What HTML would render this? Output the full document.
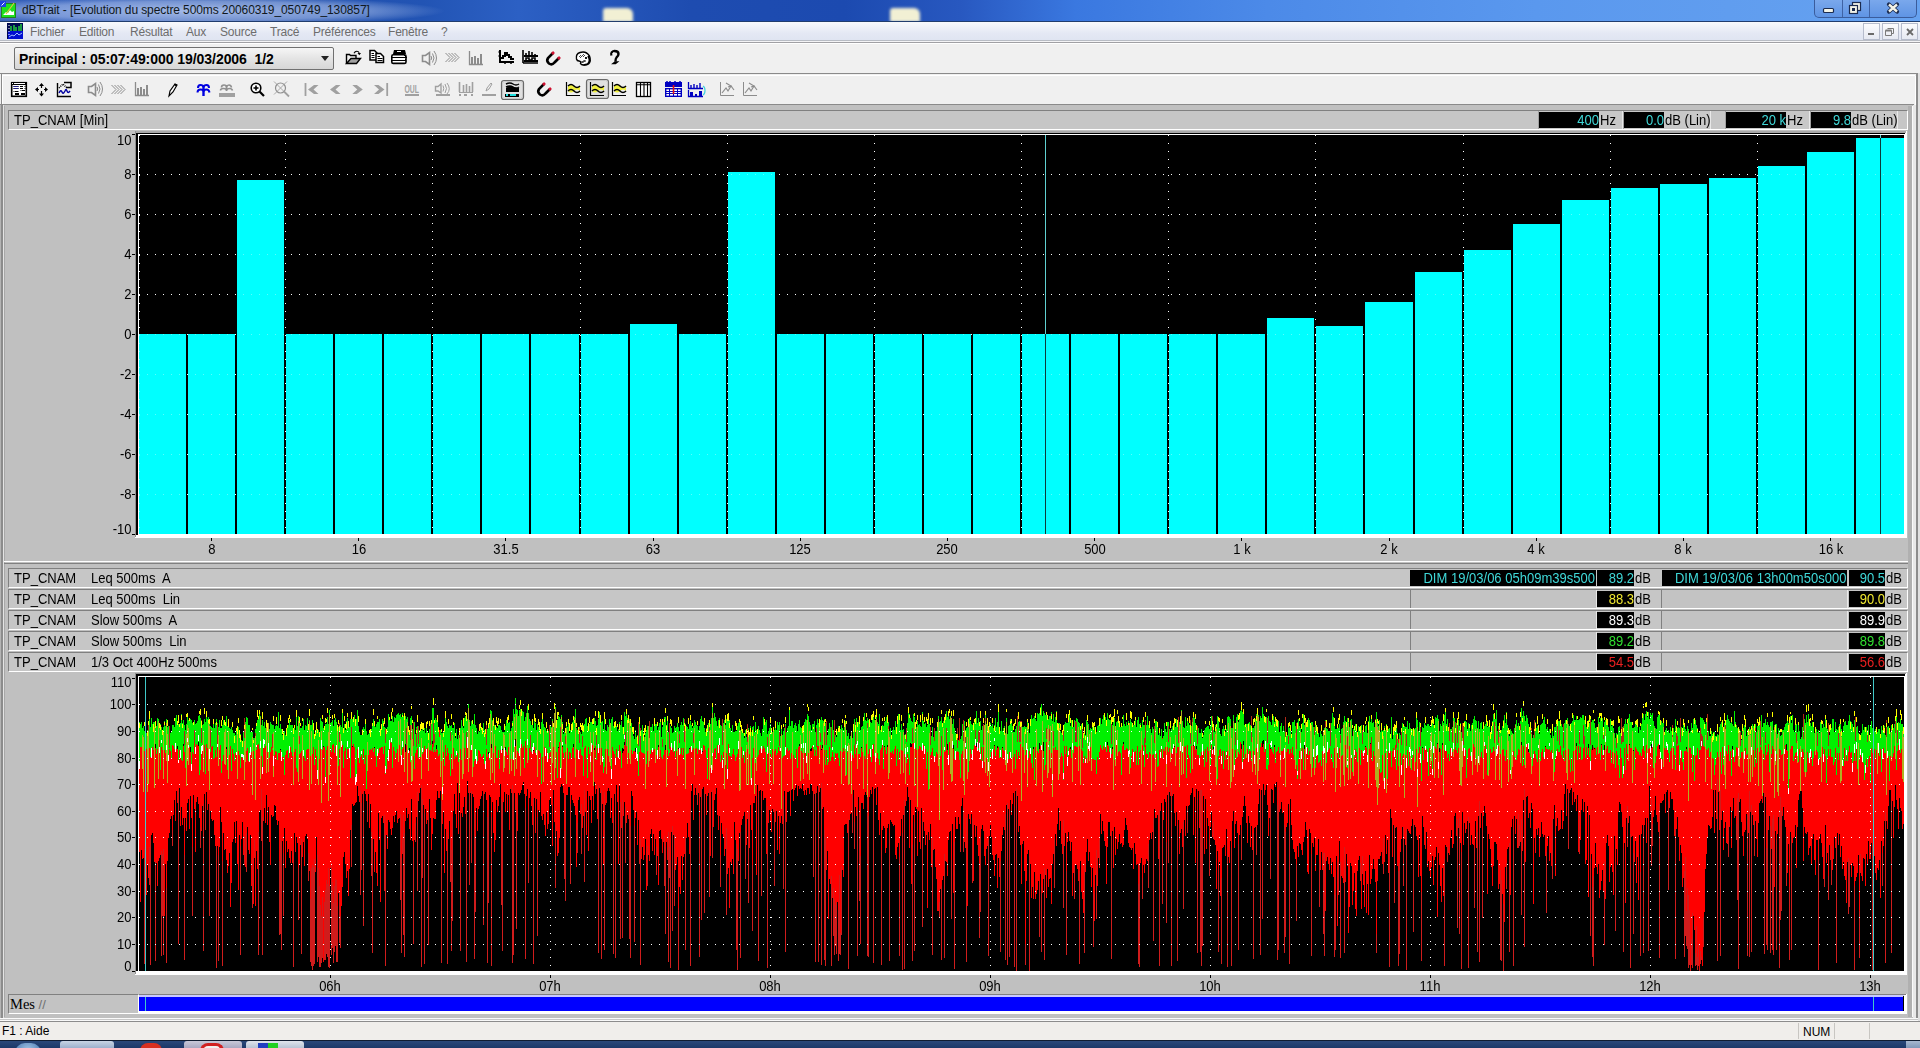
<!DOCTYPE html><html><head><meta charset="utf-8"><style>
html,body{margin:0;padding:0}
body{width:1920px;height:1048px;position:relative;overflow:hidden;background:#c0c0c0;font-family:"Liberation Sans", sans-serif;}
div{box-sizing:border-box}
.t{position:absolute;white-space:nowrap;line-height:1}
svg{position:absolute;left:0;top:0}
</style></head><body>
<div style="position:absolute;left:0px;top:0px;width:1920px;height:21px;background:linear-gradient(90deg,#3a62b8 0%,#2a58b8 3%,#1f4ca8 12%,#2254b4 22%,#2c60c4 27%,#1e4cb0 36%,#1c4ab0 44%,#2858c0 50%,#3a78e0 56%,#4c8ae8 66%,#5a98ee 80%,#66a2f0 100%)"></div><div style="position:absolute;left:0px;top:0px;width:520px;height:21px;background:radial-gradient(ellipse 250px 15px at 195px 11px, rgba(215,228,255,0.72), rgba(215,228,255,0.45) 65%, rgba(215,228,255,0) 100%)"></div><div style="position:absolute;left:603px;top:8px;width:30px;height:14px;background:#f2f0d4;filter:blur(1.5px);border-radius:3px 6px 0 0"></div><div style="position:absolute;left:890px;top:8px;width:30px;height:14px;background:#f2f0d4;filter:blur(1.5px);border-radius:3px 6px 0 0"></div><div style="position:absolute;left:0px;top:21px;width:1920px;height:1px;background:#213d6e"></div><svg width="20" height="21" style="position:absolute;left:0;top:0"><rect x="1.5" y="3.5" width="14" height="14" fill="#20e020" stroke="#208020"/><path d="M3 15l3-3l2 1l2-3l2 2l2-1v4h-11z" fill="#fff"/><path d="M6 14l8-11" stroke="#e0c040" stroke-width="1.2"/><rect x="0" y="1" width="6" height="6" fill="#2040e0"/><path d="M1.5 5.5l3-3" stroke="#fff"/></svg><div style="position:absolute;left:22px;top:3px;white-space:nowrap;font-size:12px;color:#101820;letter-spacing:-0.1px">dBTrait - [Evolution du spectre 500ms 20060319_050749_130857]</div><div style="position:absolute;left:1814px;top:0px;width:103px;height:18px;background:linear-gradient(#7aa8ec,#5f94e4);border:1px solid #3a5c9c;border-top:none;border-radius:0 0 5px 5px"></div><div style="position:absolute;left:1842px;top:0px;width:1px;height:17px;background:#3f63a5"></div><div style="position:absolute;left:1869px;top:0px;width:1px;height:17px;background:#3f63a5"></div><svg width="110" height="20" style="position:absolute;left:1814px;top:0"><rect x="9.5" y="8.5" width="10" height="4" rx="1" fill="#f4f4e8" stroke="#1c2c50" stroke-width="1.2"/><rect x="38.5" y="2.5" width="8" height="8" fill="#f4f4e8" stroke="#1c2c50" stroke-width="1.2"/><rect x="35.5" y="5.5" width="8" height="8" fill="#f4f4e8" stroke="#1c2c50" stroke-width="1.2"/><rect x="38" y="8" width="3" height="3" fill="#1c2c50"/><path d="M75 4.5l8 7M83 4.5l-8 7" stroke="#1c2c50" stroke-width="4.2" stroke-linecap="round"/><path d="M75 4.5l8 7M83 4.5l-8 7" stroke="#f4f4e8" stroke-width="2.4" stroke-linecap="butt"/></svg><div style="position:absolute;left:0px;top:22px;width:1920px;height:19px;background:linear-gradient(#f8f9fc,#e4e8f4 60%,#dfe4f1)"></div><div style="position:absolute;left:0px;top:40px;width:1920px;height:1px;background:#b8bcc4"></div><div style="position:absolute;left:0px;top:41px;width:1920px;height:1px;background:#f4f4f6"></div><div style="position:absolute;left:0px;top:42px;width:1920px;height:1px;background:#a0a0a4"></div><svg width="20" height="20" style="position:absolute;left:6px;top:22px"><rect x="1" y="1" width="16" height="16" fill="#000850"/><rect x="2" y="9" width="15" height="8" fill="#0010d0"/><path d="M5 9V4M8 9V3M10 9V5M13 9V4M15 9V2" stroke="#20c040" stroke-width="1.6"/><path d="M3 3v1M3 6v1M3 9v1M3 12v1" stroke="#fff"/><path d="M3 15l3-2l2 1l3-3l2 2l3-2" fill="none" stroke="#a0c0ff" stroke-width="1"/></svg><div style="position:absolute;left:30px;top:25px;white-space:nowrap;font-size:12px;color:#6d6d6d;letter-spacing:-0.2px">Fichier</div><div style="position:absolute;left:79px;top:25px;white-space:nowrap;font-size:12px;color:#6d6d6d;letter-spacing:-0.2px">Edition</div><div style="position:absolute;left:130px;top:25px;white-space:nowrap;font-size:12px;color:#6d6d6d;letter-spacing:-0.2px">Résultat</div><div style="position:absolute;left:186px;top:25px;white-space:nowrap;font-size:12px;color:#6d6d6d;letter-spacing:-0.2px">Aux</div><div style="position:absolute;left:220px;top:25px;white-space:nowrap;font-size:12px;color:#6d6d6d;letter-spacing:-0.2px">Source</div><div style="position:absolute;left:270px;top:25px;white-space:nowrap;font-size:12px;color:#6d6d6d;letter-spacing:-0.2px">Tracé</div><div style="position:absolute;left:313px;top:25px;white-space:nowrap;font-size:12px;color:#6d6d6d;letter-spacing:-0.2px">Préférences</div><div style="position:absolute;left:388px;top:25px;white-space:nowrap;font-size:12px;color:#6d6d6d;letter-spacing:-0.2px">Fenêtre</div><div style="position:absolute;left:441px;top:25px;white-space:nowrap;font-size:12px;color:#6d6d6d;letter-spacing:-0.2px">?</div><div style="position:absolute;left:1863px;top:23px;width:17px;height:17px;border:1px solid #b6bccc;background:linear-gradient(#fbfbfd,#e6e9f2)"></div><div style="position:absolute;left:1882px;top:23px;width:17px;height:17px;border:1px solid #b6bccc;background:linear-gradient(#fbfbfd,#e6e9f2)"></div><div style="position:absolute;left:1901px;top:23px;width:17px;height:17px;border:1px solid #b6bccc;background:linear-gradient(#fbfbfd,#e6e9f2)"></div><svg width="60" height="20" style="position:absolute;left:1860px;top:22px"><rect x="8" y="11" width="6" height="2" fill="#6a6a6a"/><path d="M27.5 6.5h6v5h-2M25.5 8.5h6v5h-6z" fill="none" stroke="#7a7a7a"/><path d="M25.5 8.5h6" stroke="#7a7a7a" stroke-width="2"/><path d="M47 7l6 6M53 7l-6 6" stroke="#6a6a6a" stroke-width="1.8"/></svg><div style="position:absolute;left:0px;top:43px;width:1920px;height:30px;background:#f0f0f0"></div><div style="position:absolute;left:0px;top:43px;width:1920px;height:1px;background:#fff"></div><div style="position:absolute;left:0px;top:73px;width:1918px;height:1px;background:#8a8a8a"></div><div style="position:absolute;left:0px;top:74px;width:1920px;height:31px;background:#f0f0f0"></div><div style="position:absolute;left:1px;top:73px;width:1917px;height:1px;background:#8a8a8a"></div><div style="position:absolute;left:2px;top:75px;width:1913px;height:1px;background:#fff"></div><div style="position:absolute;left:1px;top:74px;width:1px;height:31px;background:#8a8a8a"></div><div style="position:absolute;left:2px;top:75px;width:1px;height:30px;background:#fff"></div><div style="position:absolute;left:0px;top:104px;width:1914px;height:1px;background:#8a8a8a"></div><div style="position:absolute;left:14px;top:47px;width:320px;height:23px;border:1px solid #707070;border-radius:2px;background:linear-gradient(#f6f6f6,#e4e4e4 50%,#d6d6d6)"></div><div style="position:absolute;left:19px;top:52px;white-space:nowrap;font-size:14px;font-weight:bold;color:#000;letter-spacing:-0.05px;line-height:14px">Principal : 05:07:49:000 19/03/2006&nbsp; 1/2</div><svg width="1920" height="110" style="position:absolute;left:0;top:0"><path d="M321 56h8l-4 5z" fill="#222"/></svg><svg width="800" height="110" style="position:absolute;left:0;top:0"><path d="M346.5 63.5V54.5h3l1 1h5.5v3" stroke="#000" stroke-width="1.4" fill="none"/><path d="M346.5 63.5L351 58.5h9.5L356.5 63.5z" fill="#a0a0a0" stroke="#000" stroke-width="1.4"/><path d="M354 53.2c1.5-2.5 4-2.5 5.2-0.5" stroke="#000" stroke-width="1.2" fill="none"/><path d="M357.5 53h3.5l-1.7 2.2z" fill="#000"/><path d="M370 50.5h4.5l2.5 2.5v7h-7z" fill="#fff" stroke="#000" stroke-width="1.5"/><path d="M371.5 53.5h2.5M371.5 55.5h3M371.5 57.5h3" stroke="#000" stroke-width="1"/><path d="M376 53.5h4.5l3 3v6h-7.5z" fill="#fff" stroke="#000" stroke-width="1.5"/><path d="M377.5 56.5h2.5M377.5 58.5h5M377.5 60.5h5" stroke="#000" stroke-width="1"/><path d="M394 50h11l1 4h-13z" fill="#000"/><rect x="397" y="51" width="4" height="1" fill="#fff"/><rect x="391.8" y="54.8" width="14.2" height="8.6" rx="1.5" fill="#fff" stroke="#000" stroke-width="1.6"/><path d="M392 57.5h14M392 60.5h14" stroke="#000" stroke-width="1.2"/><path d="M404 55l3 3M404 61l2-2" stroke="#000" stroke-width="1"/><path d="M422.5 55.5h3l4-3v12l-4-3h-3z" fill="none" stroke="#8c8c8c" stroke-width="1.6"/><path d="M431 56q1.5 2 0 4M432.5 53.5q3 4.5 0 9M434 51q5 7 0 14" fill="none" stroke="#8c8c8c" stroke-width="1"/><path d="M445.5 53l4.5 4.5l-4.5 4.5M448.5 53l4.5 4.5l-4.5 4.5M451.5 53l4.5 4.5l-4.5 4.5M454.5 53l4.5 4.5l-4.5 4.5" fill="none" stroke="#8c8c8c" stroke-width="1"/><path d="M469.5 51V64.5H483" fill="none" stroke="#8c8c8c" stroke-width="1.3"/><rect x="471" y="57" width="2" height="7" fill="#8c8c8c"/><rect x="474" y="56" width="2" height="8" fill="#8c8c8c"/><rect x="477" y="58" width="2" height="6" fill="#8c8c8c"/><rect x="480" y="54" width="2" height="10" fill="#8c8c8c"/><path d="M500 50V63M500 62h14" stroke="#000" stroke-width="2"/><path d="M501 58h2v-2h2v-3h2v2h2v2h2v2h3" fill="none" stroke="#000" stroke-width="2"/><path d="M505 63v1M511 63v1M498.5 52h1M498.5 56h1" stroke="#000" stroke-width="1.5"/><path d="M523 50V63M523 63h15" stroke="#000" stroke-width="1.6"/><path d="M524 56h14M524 61h14" stroke="#000" stroke-width="2"/><path d="M526 56v-3M529 56v-5M532 56v-4M535 56v-2M526 61v-3h3v2h3v-2h3v2" fill="none" stroke="#000" stroke-width="1.6"/><path d="M553 53L548 58q-2 3 1 5.5q3 2 5.5-1L559 58" fill="none" stroke="#000" stroke-width="2.6"/><path d="M552 54l2-2M558 59l2-2" stroke="#d01030" stroke-width="2.6"/><path d="M580 52.5q6-2 9.5 3.5q2 5-1 8q-3 2-7 0.5l-1-1q1-2-1.5-2.5q-2 0-2.5-2q-1-5 3.5-6.5z" fill="#fff" stroke="#000" stroke-width="1.4"/><path d="M588 56q3 5-0.5 8l-4 1" fill="none" stroke="#000" stroke-width="1.6"/><path d="M580.5 55.5l1 1l-1 1l-1-1zM583.5 54.5l1 1l-1 1l-1-1zM586 57l1 1l-1 1l-1-1zM584.5 60l1 1l-1 1l-1-1zM582.5 61l1 1l-1 1l-1-1z" fill="#fff" stroke="#000" stroke-width="0.9"/><path d="M611.5 55.5q-1-4 3-4.5q4 0 4 3q0 2-2 3.5q-1 1-1 4" fill="none" stroke="#000" stroke-width="2.4"/><path d="M612.5 54.5q0-2 2-2" fill="none" stroke="#fff" stroke-width="0.8"/><path d="M613 63.5l2-1.5h2.5l-2 1.5z" fill="none" stroke="#000" stroke-width="1.3"/><rect x="11.7" y="82.7" width="14.6" height="13.6" fill="#fff" stroke="#000" stroke-width="1.6"/><rect x="11" y="82" width="16" height="3" fill="#000"/><rect x="14" y="83" width="11" height="1" fill="#fff"/><rect x="12" y="83" width="1" height="1" fill="#fff"/><path d="M13.5 86.5h5M20 86.5h3M24.5 86.5h1M13.5 88.5h5M20 88.5h3M24.5 88.5h1M20.5 90.5h1M22 90.5h3M13.5 91.5h1M15 91.5h3.5" stroke="#000" stroke-width="1"/><path d="M13.5 86.5h5M13.5 88.5h5" stroke="#202080" stroke-width="1"/><rect x="15" y="93" width="4" height="2" fill="#000"/><rect x="21" y="93" width="4" height="2" fill="#000"/><path d="M41.5 84.5v11M36 89.5h11" stroke="#000" stroke-width="1.2"/><path d="M41.5 83l-2.5 3h5zM41.5 96.5l-2.5-3h5zM35 89.5l3-2.5v5zM48 89.5l-3-2.5v5z" fill="#000"/><path d="M39 88h5v3h-5z" fill="#f0f0f0"/><path d="M57.5 83V96.5H71" fill="none" stroke="#000" stroke-width="1.4"/><path d="M59 93q2-4 3-1t3-1q1-3 2 0t3 0" fill="none" stroke="#0000a0" stroke-width="1.4"/><path d="M59 88l4-4l4 4h0" fill="none" stroke="#000" stroke-width="1.5" stroke-dasharray="1 1"/><path d="M64 82.5h7v5h-5" fill="none" stroke="#000" stroke-width="1.5"/><path d="M88.5 86.5h3l4-3v12l-4-3h-3z" fill="none" stroke="#8c8c8c" stroke-width="1.6"/><path d="M97 87q1.5 2 0 4M98.5 84.5q3 4.5 0 9M100 82q5 7 0 14" fill="none" stroke="#8c8c8c" stroke-width="1"/><path d="M111.5 85l4.5 4.5l-4.5 4.5M114.5 85l4.5 4.5l-4.5 4.5M117.5 85l4.5 4.5l-4.5 4.5M120.5 85l4.5 4.5l-4.5 4.5" fill="none" stroke="#8c8c8c" stroke-width="1"/><path d="M135.5 82V95.5H149" fill="none" stroke="#8c8c8c" stroke-width="1.3"/><rect x="137" y="88" width="2" height="7" fill="#8c8c8c"/><rect x="140" y="87" width="2" height="8" fill="#8c8c8c"/><rect x="143" y="89" width="2" height="6" fill="#8c8c8c"/><rect x="146" y="85" width="2" height="10" fill="#8c8c8c"/><path d="M169 96l1-5l5-7l2 1l-4 7z" fill="#fff" stroke="#000" stroke-width="1.2"/><path d="M174.5 84.5l2 1" stroke="#000" stroke-width="1.6"/><path d="M203.5 85v11" stroke="#0000e0" stroke-width="2.4"/><path d="M198 88q0-3 2.5-3t3 2q0.5-2 3-2t2.5 3M197.5 92.5q0-3 3-3t3 2q0.5-2 3-2t3 3" fill="none" stroke="#0000e0" stroke-width="2"/><path d="M226.5 85v6" stroke="#909090" stroke-width="1.8"/><path d="M221.5 87.5q0-2.5 2.5-2.5t2.5 2q0.5-2 2.5-2t2.5 2.5M220.5 90.5q0-2 3-2t3 1.5q0.5-1.5 3-1.5t3 2" fill="none" stroke="#909090" stroke-width="1.6"/><rect x="219" y="93" width="16" height="4" fill="#a0a0a0"/><circle cx="256" cy="88" r="4.8" fill="#fff" stroke="#000" stroke-width="1.6"/><path d="M253.5 88h5M256 85.5v5" stroke="#000" stroke-width="1.6"/><path d="M259.5 91.5l4.5 4.5" stroke="#000" stroke-width="2.2"/><circle cx="280.5" cy="88" r="5" fill="none" stroke="#909090" stroke-width="1.2"/><path d="M274 81.5l13 13M287 81.5l-13 13" stroke="#a0a0a0" stroke-width="0.9"/><path d="M284 91.5l5 5" stroke="#a0a0a0" stroke-width="1.8"/><path d="M305.5 83v13" stroke="#a0a0a0" stroke-width="1.8"/><path d="M308 89.5l6-4.5h4.5l-5 4.5l5 4.5h-4.5z" fill="#a0a0a0"/><path d="M330 89.5l6-4.5h4.5l-5 4.5l5 4.5h-4.5z" fill="#a0a0a0"/><path d="M362.8 89.5l-6-4.5h-4.5l5 4.5l-5 4.5h4.5z" fill="#a0a0a0"/><path d="M387.2 83v13" stroke="#a0a0a0" stroke-width="1.8"/><path d="M384.5 89.5l-6-4.5h-4.5l5 4.5l-5 4.5h4.5z" fill="#a0a0a0"/><text x="404.5" y="92.5" font-family="Liberation Sans" font-weight="bold" font-size="11" fill="#a0a0a0" textLength="14.5" lengthAdjust="spacingAndGlyphs">OUL</text><rect x="405" y="94" width="14" height="2" fill="#a0a0a0"/><path d="M435.5 86.5h2.5l3-2.5v9l-3-2h-2.5z" fill="none" stroke="#a0a0a0" stroke-width="1.4"/><path d="M443 85.5q1.5 3 0 6M445 84q3 4.5 0 9M447 83q4.5 6 0 11" fill="none" stroke="#a0a0a0" stroke-width="1"/><rect x="436" y="94" width="14" height="2" fill="#a0a0a0"/><path d="M459.5 82v10M463.5 85v7M466.5 84v8M469.5 86v6M472.5 82v10" stroke="#a0a0a0" stroke-width="1.6"/><path d="M459 92.5h14" stroke="#a0a0a0"/><path d="M459 95h2M464 95h3M471 95h2" stroke="#a0a0a0" stroke-width="2"/><path d="M486 91l1-3l4-5l1 1l-3 5z" fill="none" stroke="#a0a0a0" stroke-width="1"/><rect x="482" y="94" width="14" height="2" fill="#a0a0a0"/><rect x="501.5" y="80.5" width="22" height="19" rx="2.5" fill="#e0e0e0" stroke="#6a6a6a" stroke-width="1.2"/><rect x="502.5" y="81.5" width="20" height="17" rx="2" fill="none" stroke="#c8c8c8" stroke-width="1"/><path d="M506 84q4-2 7 0t6 0M506 87q4-2 7 0t6 0" fill="none" stroke="#000" stroke-width="1.5"/><path d="M506 88l3-2q4 0 5 1l3 1h2v4h-13z" fill="#000"/><rect x="505" y="94" width="14" height="3" fill="#000"/><rect x="506" y="94" width="2" height="2" fill="#20e0e0"/><rect x="510" y="94" width="6" height="2" fill="#20e0e0"/><path d="M544 84L539 89q-2 3 1 5.5q3 2 5.5-1L550 89" fill="none" stroke="#000" stroke-width="2.6"/><path d="M543 85l2-2M549 90l2-2" stroke="#d01030" stroke-width="2.6"/><path d="M566.5 82V95.5H580" fill="none" stroke="#000" stroke-width="1.2"/><path d="M568 86q3-3 6 0t6 0v5q-3-3-6 0t-6 0z" fill="#f0f040"/><path d="M568 86q3-3 6 0t6 0M568 91q3-3 6 0t6 0" fill="none" stroke="#000" stroke-width="1.6"/><rect x="586.5" y="79.5" width="22" height="19" rx="2.5" fill="#e0e0e0" stroke="#6a6a6a" stroke-width="1.2"/><rect x="587.5" y="80.5" width="20" height="17" rx="2" fill="none" stroke="#c8c8c8" stroke-width="1"/><path d="M590.5 82V95.5H604" fill="none" stroke="#000" stroke-width="1.2"/><path d="M592 86q3-3 6 0t6 0v5q-3-3-6 0t-6 0z" fill="#f0f040"/><path d="M592 86q3-3 6 0t6 0M592 91q3-3 6 0t6 0" fill="none" stroke="#000" stroke-width="1.6"/><path d="M612.5 82V95.5H626" fill="none" stroke="#000" stroke-width="1.2"/><path d="M614 86q3-3 6 0t6 0v5q-3-3-6 0t-6 0z" fill="#f0f040"/><path d="M614 86q3-3 6 0t6 0M614 91q3-3 6 0t6 0" fill="none" stroke="#000" stroke-width="1.6"/><rect x="636.5" y="82.5" width="14" height="14" fill="#fff" stroke="#000" stroke-width="1.3"/><path d="M636 84.8h15M640.5 83v13M644 83v13M647.5 83v13" stroke="#000" stroke-width="1.1"/><rect x="665" y="82" width="17" height="5" fill="#0000c0"/><path d="M667 82v-1M670 82v-1M675 82v-1M680 82v-1" stroke="#0000c0" stroke-width="1.5"/><rect x="665.7" y="88.7" width="15.6" height="7.6" fill="#fff" stroke="#0000c0" stroke-width="1.4"/><path d="M666 91.5h15M666 93.5h15M669.5 89v7M673.5 89v7M677.5 89v7" stroke="#0000c0" stroke-width="1"/><path d="M673.5 85v9" stroke="#e01010" stroke-width="1.6"/><path d="M688.5 82v6.5H703M688.5 90v6.5H703" fill="none" stroke="#0000c0" stroke-width="1.3"/><path d="M691 85v3M694 84v4M697 85v3M700 83v5" stroke="#0000c0" stroke-width="1.4"/><rect x="690" y="92" width="3" height="4" fill="#0000c0"/><rect x="695" y="94" width="2" height="2" fill="#0000c0"/><rect x="699" y="91" width="3" height="5" fill="#0000c0"/><path d="M703 86q2 1 2 4.5t-2 4.5" fill="none" stroke="#40d0e0" stroke-width="1.2"/><path d="M720.5 82V95.5H734" fill="none" stroke="#8c8c8c" stroke-width="1"/><path d="M722 93l4-5l2 3l3-5l3 4" fill="none" stroke="#8c8c8c" stroke-width="1.2"/><path d="M726 83l5 3l-3 1" fill="none" stroke="#8c8c8c" stroke-width="1.2"/><path d="M743.5 82V95.5H757" fill="none" stroke="#8c8c8c" stroke-width="1"/><path d="M745 93l4-5l2 3l3-5l3 4" fill="none" stroke="#8c8c8c" stroke-width="1.2"/><path d="M749 83l5 3l-3 1" fill="none" stroke="#8c8c8c" stroke-width="1.2"/></svg><div style="position:absolute;left:0px;top:105px;width:1px;height:916px;background:#b4b4b4"></div><div style="position:absolute;left:1px;top:105px;width:2px;height:914px;background:#8c8c8c"></div><div style="position:absolute;left:3px;top:105px;width:1px;height:913px;background:#e4e4e4"></div><div style="position:absolute;left:4px;top:106px;width:1px;height:911px;background:#a8a8a8"></div><div style="position:absolute;left:1913px;top:105px;width:3px;height:914px;background:#e8e8e8"></div><div style="position:absolute;left:1915px;top:76px;width:1px;height:29px;background:#fff"></div><div style="position:absolute;left:1916px;top:73px;width:2px;height:946px;background:#8c8c8c"></div><div style="position:absolute;left:1918px;top:73px;width:2px;height:948px;background:#e0e0e0"></div><div style="position:absolute;left:1908px;top:106px;width:4px;height:911px;background:#b0b0b0"></div><div style="position:absolute;left:1912px;top:106px;width:1px;height:911px;background:#fafafa"></div><div style="position:absolute;left:0px;top:1018px;width:1918px;height:1px;background:#fafafa"></div><div style="position:absolute;left:0px;top:1019px;width:1918px;height:1px;background:#c8c8c8"></div><div style="position:absolute;left:0px;top:1020px;width:1918px;height:1px;background:#f8f8f8"></div><div style="position:absolute;left:0px;top:1021px;width:1920px;height:1px;background:#8c8c8c"></div><div style="position:absolute;left:8px;top:110px;width:1900px;height:20px;background:#c6c6c6;border-top:1px solid #808080;border-left:1px solid #808080;border-bottom:1px solid #fff;border-right:1px solid #fff"></div><div style="position:absolute;left:14px;top:113px;white-space:nowrap;font-size:14px;color:#000;line-height:14px;transform:scaleX(0.93);transform-origin:0 0">TP_CNAM [Min]</div><div style="position:absolute;left:1538px;top:111px;width:85px;height:18px;background:#c8c8c8;border-left:1px solid #a0a0a0;border-right:1px solid #e8e8e8"></div><div style="position:absolute;left:1539px;top:112px;width:60px;height:16px;background:#000"></div><div style="position:absolute;left:1539px;top:113px;width:60px;white-space:nowrap;font-size:14px;color:#000;line-height:14px;transform:scaleX(0.93);transform-origin:100% 0;text-align:right;color:#3fd8d8">400</div><div style="position:absolute;left:1600px;top:113px;white-space:nowrap;font-size:14px;color:#000;line-height:14px;transform:scaleX(0.93);transform-origin:0 0">Hz</div><div style="position:absolute;left:1623px;top:111px;width:88px;height:18px;background:#c8c8c8;border-left:1px solid #a0a0a0;border-right:1px solid #e8e8e8"></div><div style="position:absolute;left:1624px;top:112px;width:40px;height:16px;background:#000"></div><div style="position:absolute;left:1624px;top:113px;width:40px;white-space:nowrap;font-size:14px;color:#000;line-height:14px;transform:scaleX(0.93);transform-origin:100% 0;text-align:right;color:#3fd8d8">0.0</div><div style="position:absolute;left:1665px;top:113px;white-space:nowrap;font-size:14px;color:#000;line-height:14px;transform:scaleX(0.93);transform-origin:0 0">dB (Lin)</div><div style="position:absolute;left:1725px;top:111px;width:85px;height:18px;background:#c8c8c8;border-left:1px solid #a0a0a0;border-right:1px solid #e8e8e8"></div><div style="position:absolute;left:1726px;top:112px;width:60px;height:16px;background:#000"></div><div style="position:absolute;left:1726px;top:113px;width:60px;white-space:nowrap;font-size:14px;color:#000;line-height:14px;transform:scaleX(0.93);transform-origin:100% 0;text-align:right;color:#3fd8d8">20 k</div><div style="position:absolute;left:1787px;top:113px;white-space:nowrap;font-size:14px;color:#000;line-height:14px;transform:scaleX(0.93);transform-origin:0 0">Hz</div><div style="position:absolute;left:1810px;top:111px;width:88px;height:18px;background:#c8c8c8;border-left:1px solid #a0a0a0;border-right:1px solid #e8e8e8"></div><div style="position:absolute;left:1811px;top:112px;width:40px;height:16px;background:#000"></div><div style="position:absolute;left:1811px;top:113px;width:40px;white-space:nowrap;font-size:14px;color:#000;line-height:14px;transform:scaleX(0.93);transform-origin:100% 0;text-align:right;color:#3fd8d8">9.8</div><div style="position:absolute;left:1852px;top:113px;white-space:nowrap;font-size:14px;color:#000;line-height:14px;transform:scaleX(0.93);transform-origin:0 0">dB (Lin)</div><svg width="1920" height="1048" style="position:absolute;left:0;top:0" shape-rendering="crispEdges"><rect x="135" y="131" width="1772" height="407" fill="#fff"/><rect x="135" y="131" width="1771" height="2" fill="#a8a8a8"/><rect x="135" y="131" width="1" height="406" fill="#909090"/><rect x="136" y="133" width="1769" height="1" fill="#000"/><rect x="136" y="133" width="2" height="402" fill="#000"/><rect x="139" y="135" width="1765" height="399" fill="#000"/><path d="M139 174.5H1904M139 214.5H1904M139 254.5H1904M139 294.5H1904M139 334.5H1904M139 374.5H1904M139 414.5H1904M139 454.5H1904M139 494.5H1904M139.5 135V534M285.5 135V534M432.5 135V534M580.5 135V534M727.5 135V534M874.5 135V534M1021.5 135V534M1168.5 135V534M1315.5 135V534M1463.5 135V534M1610.5 135V534M1757.5 135V534" stroke="#fff" stroke-width="1" stroke-dasharray="1 7" fill="none"/><rect x="139" y="334" width="47" height="200" fill="#00ffff"/><rect x="188" y="334" width="47" height="200" fill="#00ffff"/><rect x="237" y="180" width="47" height="354" fill="#00ffff"/><rect x="286" y="334" width="47" height="200" fill="#00ffff"/><rect x="335" y="334" width="47" height="200" fill="#00ffff"/><rect x="384" y="334" width="47" height="200" fill="#00ffff"/><rect x="433" y="334" width="47" height="200" fill="#00ffff"/><rect x="482" y="334" width="47" height="200" fill="#00ffff"/><rect x="531" y="334" width="48" height="200" fill="#00ffff"/><rect x="581" y="334" width="47" height="200" fill="#00ffff"/><rect x="630" y="324" width="47" height="210" fill="#00ffff"/><rect x="679" y="334" width="47" height="200" fill="#00ffff"/><rect x="728" y="172" width="47" height="362" fill="#00ffff"/><rect x="777" y="334" width="47" height="200" fill="#00ffff"/><rect x="826" y="334" width="47" height="200" fill="#00ffff"/><rect x="875" y="334" width="47" height="200" fill="#00ffff"/><rect x="924" y="334" width="47" height="200" fill="#00ffff"/><rect x="973" y="334" width="47" height="200" fill="#00ffff"/><rect x="1022" y="334" width="47" height="200" fill="#00ffff"/><rect x="1071" y="334" width="47" height="200" fill="#00ffff"/><rect x="1120" y="334" width="47" height="200" fill="#00ffff"/><rect x="1169" y="334" width="47" height="200" fill="#00ffff"/><rect x="1218" y="334" width="47" height="200" fill="#00ffff"/><rect x="1267" y="318" width="47" height="216" fill="#00ffff"/><rect x="1316" y="326" width="47" height="208" fill="#00ffff"/><rect x="1365" y="302" width="48" height="232" fill="#00ffff"/><rect x="1415" y="272" width="47" height="262" fill="#00ffff"/><rect x="1464" y="250" width="47" height="284" fill="#00ffff"/><rect x="1513" y="224" width="47" height="310" fill="#00ffff"/><rect x="1562" y="200" width="47" height="334" fill="#00ffff"/><rect x="1611" y="188" width="47" height="346" fill="#00ffff"/><rect x="1660" y="184" width="47" height="350" fill="#00ffff"/><rect x="1709" y="178" width="47" height="356" fill="#00ffff"/><rect x="1758" y="166" width="47" height="368" fill="#00ffff"/><rect x="1807" y="152" width="47" height="382" fill="#00ffff"/><rect x="1856" y="138" width="48" height="396" fill="#00ffff"/><path d="M139 174.5H1904M139 214.5H1904M139 254.5H1904M139 294.5H1904M139 334.5H1904M139 374.5H1904M139 414.5H1904M139 454.5H1904M139 494.5H1904M139.5 135V535M285.5 135V535M432.5 135V535M580.5 135V535M727.5 135V535M874.5 135V535M1021.5 135V535M1168.5 135V535M1315.5 135V535M1463.5 135V535M1610.5 135V535M1757.5 135V535" stroke="#fff" stroke-width="1" stroke-dasharray="1 7" fill="none" opacity="0.35"/><rect x="1045" y="135" width="1" height="199" fill="#5fd0d0"/><rect x="1045" y="334" width="1" height="200" fill="#0c3a3a"/><rect x="1880" y="135" width="1" height="3" fill="#5fd0d0"/><rect x="1880" y="138" width="1" height="396" fill="#0c3a3a"/><path d="M132 134.5H135M132 174.5H135M132 214.5H135M132 254.5H135M132 294.5H135M132 334.5H135M132 374.5H135M132 414.5H135M132 454.5H135M132 494.5H135M132 534.5H135" stroke="#000" stroke-width="1"/><path d="M211.5 538V541M358.5 538V541M505.5 538V541M653.5 538V541M800.5 538V541M947.5 538V541M1094.5 538V541M1241.5 538V541M1389.5 538V541M1536.5 538V541M1683.5 538V541M1830.5 538V541" stroke="#000" stroke-width="1"/></svg><div style="position:absolute;left:60px;top:133px;width:71.5px;white-space:nowrap;font-size:14px;color:#000;line-height:14px;transform:scaleX(0.93);transform-origin:100% 0;text-align:right">10</div><div style="position:absolute;left:60px;top:167px;width:71.5px;white-space:nowrap;font-size:14px;color:#000;line-height:14px;transform:scaleX(0.93);transform-origin:100% 0;text-align:right">8</div><div style="position:absolute;left:60px;top:207px;width:71.5px;white-space:nowrap;font-size:14px;color:#000;line-height:14px;transform:scaleX(0.93);transform-origin:100% 0;text-align:right">6</div><div style="position:absolute;left:60px;top:247px;width:71.5px;white-space:nowrap;font-size:14px;color:#000;line-height:14px;transform:scaleX(0.93);transform-origin:100% 0;text-align:right">4</div><div style="position:absolute;left:60px;top:287px;width:71.5px;white-space:nowrap;font-size:14px;color:#000;line-height:14px;transform:scaleX(0.93);transform-origin:100% 0;text-align:right">2</div><div style="position:absolute;left:60px;top:327px;width:71.5px;white-space:nowrap;font-size:14px;color:#000;line-height:14px;transform:scaleX(0.93);transform-origin:100% 0;text-align:right">0</div><div style="position:absolute;left:60px;top:367px;width:71.5px;white-space:nowrap;font-size:14px;color:#000;line-height:14px;transform:scaleX(0.93);transform-origin:100% 0;text-align:right">-2</div><div style="position:absolute;left:60px;top:407px;width:71.5px;white-space:nowrap;font-size:14px;color:#000;line-height:14px;transform:scaleX(0.93);transform-origin:100% 0;text-align:right">-4</div><div style="position:absolute;left:60px;top:447px;width:71.5px;white-space:nowrap;font-size:14px;color:#000;line-height:14px;transform:scaleX(0.93);transform-origin:100% 0;text-align:right">-6</div><div style="position:absolute;left:60px;top:487px;width:71.5px;white-space:nowrap;font-size:14px;color:#000;line-height:14px;transform:scaleX(0.93);transform-origin:100% 0;text-align:right">-8</div><div style="position:absolute;left:60px;top:522px;width:71.5px;white-space:nowrap;font-size:14px;color:#000;line-height:14px;transform:scaleX(0.93);transform-origin:100% 0;text-align:right">-10</div><div style="position:absolute;left:172px;top:542px;width:80px;white-space:nowrap;font-size:14px;color:#000;line-height:14px;transform:scaleX(0.93);transform-origin:50% 0;text-align:center">8</div><div style="position:absolute;left:319px;top:542px;width:80px;white-space:nowrap;font-size:14px;color:#000;line-height:14px;transform:scaleX(0.93);transform-origin:50% 0;text-align:center">16</div><div style="position:absolute;left:466px;top:542px;width:80px;white-space:nowrap;font-size:14px;color:#000;line-height:14px;transform:scaleX(0.93);transform-origin:50% 0;text-align:center">31.5</div><div style="position:absolute;left:613px;top:542px;width:80px;white-space:nowrap;font-size:14px;color:#000;line-height:14px;transform:scaleX(0.93);transform-origin:50% 0;text-align:center">63</div><div style="position:absolute;left:760px;top:542px;width:80px;white-space:nowrap;font-size:14px;color:#000;line-height:14px;transform:scaleX(0.93);transform-origin:50% 0;text-align:center">125</div><div style="position:absolute;left:907px;top:542px;width:80px;white-space:nowrap;font-size:14px;color:#000;line-height:14px;transform:scaleX(0.93);transform-origin:50% 0;text-align:center">250</div><div style="position:absolute;left:1055px;top:542px;width:80px;white-space:nowrap;font-size:14px;color:#000;line-height:14px;transform:scaleX(0.93);transform-origin:50% 0;text-align:center">500</div><div style="position:absolute;left:1202px;top:542px;width:80px;white-space:nowrap;font-size:14px;color:#000;line-height:14px;transform:scaleX(0.93);transform-origin:50% 0;text-align:center">1 k</div><div style="position:absolute;left:1349px;top:542px;width:80px;white-space:nowrap;font-size:14px;color:#000;line-height:14px;transform:scaleX(0.93);transform-origin:50% 0;text-align:center">2 k</div><div style="position:absolute;left:1496px;top:542px;width:80px;white-space:nowrap;font-size:14px;color:#000;line-height:14px;transform:scaleX(0.93);transform-origin:50% 0;text-align:center">4 k</div><div style="position:absolute;left:1643px;top:542px;width:80px;white-space:nowrap;font-size:14px;color:#000;line-height:14px;transform:scaleX(0.93);transform-origin:50% 0;text-align:center">8 k</div><div style="position:absolute;left:1791px;top:542px;width:80px;white-space:nowrap;font-size:14px;color:#000;line-height:14px;transform:scaleX(0.93);transform-origin:50% 0;text-align:center">16 k</div><div style="position:absolute;left:4px;top:561px;width:1904px;height:1px;background:#fff"></div><div style="position:absolute;left:4px;top:563px;width:1904px;height:1px;background:#808080"></div><div style="position:absolute;left:8px;top:568px;width:1900px;height:20px;background:#c6c6c6;border-top:1px solid #808080;border-left:1px solid #808080;border-bottom:1px solid #fff;border-right:1px solid #fff"></div><div style="position:absolute;left:14px;top:571px;white-space:nowrap;font-size:14px;color:#000;line-height:14px;transform:scaleX(0.93);transform-origin:0 0">TP_CNAM</div><div style="position:absolute;left:91px;top:571px;white-space:nowrap;font-size:14px;color:#000;line-height:14px;transform:scaleX(0.93);transform-origin:0 0">Leq 500ms&nbsp; A</div><div style="position:absolute;left:1410px;top:570px;width:186px;height:16px;background:#000"></div><div style="position:absolute;left:1410px;top:571px;width:185px;white-space:nowrap;font-size:14px;color:#000;line-height:14px;transform:scaleX(0.93);transform-origin:100% 0;text-align:right;color:#3fd8d8">DIM 19/03/06 05h09m39s500</div><div style="position:absolute;left:1662px;top:570px;width:185px;height:16px;background:#000"></div><div style="position:absolute;left:1662px;top:571px;width:184px;white-space:nowrap;font-size:14px;color:#000;line-height:14px;transform:scaleX(0.93);transform-origin:100% 0;text-align:right;color:#3fd8d8">DIM 19/03/06 13h00m50s000</div><div style="position:absolute;left:1597px;top:570px;width:37px;height:16px;background:#000"></div><div style="position:absolute;left:1597px;top:571px;width:37px;white-space:nowrap;font-size:14px;color:#000;line-height:14px;transform:scaleX(0.93);transform-origin:100% 0;text-align:right;color:#3fd8d8">89.2</div><div style="position:absolute;left:1635px;top:571px;white-space:nowrap;font-size:14px;color:#000;line-height:14px;transform:scaleX(0.93);transform-origin:0 0">dB</div><div style="position:absolute;left:1849px;top:570px;width:36px;height:16px;background:#000"></div><div style="position:absolute;left:1849px;top:571px;width:36px;white-space:nowrap;font-size:14px;color:#000;line-height:14px;transform:scaleX(0.93);transform-origin:100% 0;text-align:right;color:#3fd8d8">90.5</div><div style="position:absolute;left:1886px;top:571px;white-space:nowrap;font-size:14px;color:#000;line-height:14px;transform:scaleX(0.93);transform-origin:0 0">dB</div><div style="position:absolute;left:8px;top:589px;width:1900px;height:20px;background:#c6c6c6;border-top:1px solid #808080;border-left:1px solid #808080;border-bottom:1px solid #fff;border-right:1px solid #fff"></div><div style="position:absolute;left:14px;top:592px;white-space:nowrap;font-size:14px;color:#000;line-height:14px;transform:scaleX(0.93);transform-origin:0 0">TP_CNAM</div><div style="position:absolute;left:91px;top:592px;white-space:nowrap;font-size:14px;color:#000;line-height:14px;transform:scaleX(0.93);transform-origin:0 0">Leq 500ms&nbsp; Lin</div><div style="position:absolute;left:1410px;top:590px;width:187px;height:18px;background:#c3c3c3;border-left:1px solid #808080;border-right:1px solid #e8e8e8"></div><div style="position:absolute;left:1661px;top:590px;width:187px;height:18px;background:#c3c3c3;border-left:1px solid #808080;border-right:1px solid #e8e8e8"></div><div style="position:absolute;left:1597px;top:591px;width:37px;height:16px;background:#000"></div><div style="position:absolute;left:1597px;top:592px;width:37px;white-space:nowrap;font-size:14px;color:#000;line-height:14px;transform:scaleX(0.93);transform-origin:100% 0;text-align:right;color:#f0e830">88.3</div><div style="position:absolute;left:1635px;top:592px;white-space:nowrap;font-size:14px;color:#000;line-height:14px;transform:scaleX(0.93);transform-origin:0 0">dB</div><div style="position:absolute;left:1849px;top:591px;width:36px;height:16px;background:#000"></div><div style="position:absolute;left:1849px;top:592px;width:36px;white-space:nowrap;font-size:14px;color:#000;line-height:14px;transform:scaleX(0.93);transform-origin:100% 0;text-align:right;color:#f0e830">90.0</div><div style="position:absolute;left:1886px;top:592px;white-space:nowrap;font-size:14px;color:#000;line-height:14px;transform:scaleX(0.93);transform-origin:0 0">dB</div><div style="position:absolute;left:8px;top:610px;width:1900px;height:20px;background:#c6c6c6;border-top:1px solid #808080;border-left:1px solid #808080;border-bottom:1px solid #fff;border-right:1px solid #fff"></div><div style="position:absolute;left:14px;top:613px;white-space:nowrap;font-size:14px;color:#000;line-height:14px;transform:scaleX(0.93);transform-origin:0 0">TP_CNAM</div><div style="position:absolute;left:91px;top:613px;white-space:nowrap;font-size:14px;color:#000;line-height:14px;transform:scaleX(0.93);transform-origin:0 0">Slow 500ms&nbsp; A</div><div style="position:absolute;left:1410px;top:611px;width:187px;height:18px;background:#c3c3c3;border-left:1px solid #808080;border-right:1px solid #e8e8e8"></div><div style="position:absolute;left:1661px;top:611px;width:187px;height:18px;background:#c3c3c3;border-left:1px solid #808080;border-right:1px solid #e8e8e8"></div><div style="position:absolute;left:1597px;top:612px;width:37px;height:16px;background:#000"></div><div style="position:absolute;left:1597px;top:613px;width:37px;white-space:nowrap;font-size:14px;color:#000;line-height:14px;transform:scaleX(0.93);transform-origin:100% 0;text-align:right;color:#ffffff">89.3</div><div style="position:absolute;left:1635px;top:613px;white-space:nowrap;font-size:14px;color:#000;line-height:14px;transform:scaleX(0.93);transform-origin:0 0">dB</div><div style="position:absolute;left:1849px;top:612px;width:36px;height:16px;background:#000"></div><div style="position:absolute;left:1849px;top:613px;width:36px;white-space:nowrap;font-size:14px;color:#000;line-height:14px;transform:scaleX(0.93);transform-origin:100% 0;text-align:right;color:#ffffff">89.9</div><div style="position:absolute;left:1886px;top:613px;white-space:nowrap;font-size:14px;color:#000;line-height:14px;transform:scaleX(0.93);transform-origin:0 0">dB</div><div style="position:absolute;left:8px;top:631px;width:1900px;height:20px;background:#c6c6c6;border-top:1px solid #808080;border-left:1px solid #808080;border-bottom:1px solid #fff;border-right:1px solid #fff"></div><div style="position:absolute;left:14px;top:634px;white-space:nowrap;font-size:14px;color:#000;line-height:14px;transform:scaleX(0.93);transform-origin:0 0">TP_CNAM</div><div style="position:absolute;left:91px;top:634px;white-space:nowrap;font-size:14px;color:#000;line-height:14px;transform:scaleX(0.93);transform-origin:0 0">Slow 500ms&nbsp; Lin</div><div style="position:absolute;left:1410px;top:632px;width:187px;height:18px;background:#c3c3c3;border-left:1px solid #808080;border-right:1px solid #e8e8e8"></div><div style="position:absolute;left:1661px;top:632px;width:187px;height:18px;background:#c3c3c3;border-left:1px solid #808080;border-right:1px solid #e8e8e8"></div><div style="position:absolute;left:1597px;top:633px;width:37px;height:16px;background:#000"></div><div style="position:absolute;left:1597px;top:634px;width:37px;white-space:nowrap;font-size:14px;color:#000;line-height:14px;transform:scaleX(0.93);transform-origin:100% 0;text-align:right;color:#30e030">89.2</div><div style="position:absolute;left:1635px;top:634px;white-space:nowrap;font-size:14px;color:#000;line-height:14px;transform:scaleX(0.93);transform-origin:0 0">dB</div><div style="position:absolute;left:1849px;top:633px;width:36px;height:16px;background:#000"></div><div style="position:absolute;left:1849px;top:634px;width:36px;white-space:nowrap;font-size:14px;color:#000;line-height:14px;transform:scaleX(0.93);transform-origin:100% 0;text-align:right;color:#30e030">89.8</div><div style="position:absolute;left:1886px;top:634px;white-space:nowrap;font-size:14px;color:#000;line-height:14px;transform:scaleX(0.93);transform-origin:0 0">dB</div><div style="position:absolute;left:8px;top:652px;width:1900px;height:20px;background:#c6c6c6;border-top:1px solid #808080;border-left:1px solid #808080;border-bottom:1px solid #fff;border-right:1px solid #fff"></div><div style="position:absolute;left:14px;top:655px;white-space:nowrap;font-size:14px;color:#000;line-height:14px;transform:scaleX(0.93);transform-origin:0 0">TP_CNAM</div><div style="position:absolute;left:91px;top:655px;white-space:nowrap;font-size:14px;color:#000;line-height:14px;transform:scaleX(0.93);transform-origin:0 0">1/3 Oct 400Hz 500ms</div><div style="position:absolute;left:1410px;top:653px;width:187px;height:18px;background:#c3c3c3;border-left:1px solid #808080;border-right:1px solid #e8e8e8"></div><div style="position:absolute;left:1661px;top:653px;width:187px;height:18px;background:#c3c3c3;border-left:1px solid #808080;border-right:1px solid #e8e8e8"></div><div style="position:absolute;left:1597px;top:654px;width:37px;height:16px;background:#000"></div><div style="position:absolute;left:1597px;top:655px;width:37px;white-space:nowrap;font-size:14px;color:#000;line-height:14px;transform:scaleX(0.93);transform-origin:100% 0;text-align:right;color:#e82020">54.5</div><div style="position:absolute;left:1635px;top:655px;white-space:nowrap;font-size:14px;color:#000;line-height:14px;transform:scaleX(0.93);transform-origin:0 0">dB</div><div style="position:absolute;left:1849px;top:654px;width:36px;height:16px;background:#000"></div><div style="position:absolute;left:1849px;top:655px;width:36px;white-space:nowrap;font-size:14px;color:#000;line-height:14px;transform:scaleX(0.93);transform-origin:100% 0;text-align:right;color:#e82020">56.6</div><div style="position:absolute;left:1886px;top:655px;white-space:nowrap;font-size:14px;color:#000;line-height:14px;transform:scaleX(0.93);transform-origin:0 0">dB</div><svg width="1920" height="1048" style="position:absolute;left:0;top:0" shape-rendering="crispEdges"><rect x="135" y="673" width="1772" height="302" fill="#fff"/><rect x="135" y="673" width="1771" height="1" fill="#909090"/><rect x="135" y="673" width="1" height="301" fill="#909090"/><rect x="136" y="674" width="1769" height="2" fill="#000"/><rect x="136" y="674" width="2" height="297" fill="#000"/><rect x="139" y="677" width="1765" height="294" fill="#000"/><path d="M139.5 741V852M140.5 738V902M141.5 742V850M142.5 741V859M143.5 748V858M144.5 746V849M145.5 747V844M146.5 746V895M147.5 743V864M148.5 741V878M149.5 744V847M150.5 745V839M151.5 743V835M152.5 743V833M153.5 741V843M154.5 744V862M155.5 748V861M156.5 746V863M157.5 748V886M158.5 745V861M159.5 754V858M160.5 739V855M161.5 745V851M162.5 742V854M163.5 742V849M164.5 747V916M165.5 745V864M166.5 745V888M167.5 747V861M168.5 741V838M169.5 748V833M170.5 744V819M171.5 744V816M172.5 739V830M173.5 746V815M174.5 740V800M175.5 745V821M176.5 746V791M177.5 749V803M178.5 747V790M179.5 750V788M180.5 744V826M181.5 750V807M182.5 745V825M183.5 746V818M184.5 745V855M185.5 743V818M186.5 743V831M187.5 741V803M188.5 741V799M189.5 746V829M190.5 752V796M191.5 746V818M192.5 744V847M193.5 743V795M194.5 743V809M195.5 751V852M196.5 744V802M197.5 742V797M198.5 746V804M199.5 744V818M200.5 742V827M201.5 743V831M202.5 746V806M203.5 743V804M204.5 743V794M205.5 747V800M206.5 740V792M207.5 740V810M208.5 743V804M209.5 741V804M210.5 747V811M211.5 744V819M212.5 738V821M213.5 741V820M214.5 744V835M215.5 746V846M216.5 738V847M217.5 748V846M218.5 746V855M219.5 745V847M220.5 742V807M221.5 742V822M222.5 738V861M223.5 745V833M224.5 743V850M225.5 739V849M226.5 749V860M227.5 746V873M228.5 748V866M229.5 745V853M230.5 745V907M231.5 746V883M232.5 748V842M233.5 739V839M234.5 741V822M235.5 745V843M236.5 746V821M237.5 738V864M238.5 748V890M239.5 750V835M240.5 748V846M241.5 748V839M242.5 742V822M243.5 745V855M244.5 738V836M245.5 744V867M246.5 749V833M247.5 736V827M248.5 746V850M249.5 741V854M250.5 748V835M251.5 748V886M252.5 741V858M253.5 744V904M254.5 747V840M255.5 744V906M256.5 745V851M257.5 743V869M258.5 743V832M259.5 743V812M260.5 742V810M261.5 746V789M262.5 746V817M263.5 745V821M264.5 744V808M265.5 743V823M266.5 742V795M267.5 747V825M268.5 737V807M269.5 744V842M270.5 745V865M271.5 745V815M272.5 748V817M273.5 747V816M274.5 746V805M275.5 744V806M276.5 749V820M277.5 745V825M278.5 751V821M279.5 746V861M280.5 750V840M281.5 748V842M282.5 742V841M283.5 743V853M284.5 741V828M285.5 742V868M286.5 747V841M287.5 743V852M288.5 743V849M289.5 741V858M290.5 747V863M291.5 744V851M292.5 746V863M293.5 744V850M294.5 741V833M295.5 748V852M296.5 740V837M297.5 741V843M298.5 746V868M299.5 744V864M300.5 746V845M301.5 744V839M302.5 745V857M303.5 743V842M304.5 741V866M305.5 745V836M306.5 744V834M307.5 742V839M308.5 741V853M309.5 745V871M310.5 742V899M311.5 744V868M312.5 743V865M313.5 746V867M314.5 741V859M315.5 745V872M316.5 749V837M317.5 746V855M318.5 744V868M319.5 751V886M320.5 739V905M321.5 745V916M322.5 744V897M323.5 747V962M324.5 742V902M325.5 740V890M326.5 744V880M327.5 746V884M328.5 743V868M329.5 745V886M330.5 742V868M331.5 747V863M332.5 741V882M333.5 739V903M334.5 748V886M335.5 740V879M336.5 741V880M337.5 744V906M338.5 743V893M339.5 742V893M340.5 747V916M341.5 743V906M342.5 742V887M343.5 740V857M344.5 742V852M345.5 743V864M346.5 745V878M347.5 744V871M348.5 745V896M349.5 737V869M350.5 745V830M351.5 744V825M352.5 747V804M353.5 743V806M354.5 742V805M355.5 741V803M356.5 743V802M357.5 743V786M358.5 749V796M359.5 747V802M360.5 743V791M361.5 743V803M362.5 747V794M363.5 738V792M364.5 742V791M365.5 742V794M366.5 747V801M367.5 741V802M368.5 740V794M369.5 745V828M370.5 742V804M371.5 744V832M372.5 745V840M373.5 746V839M374.5 748V872M375.5 741V852M376.5 741V873M377.5 743V886M378.5 743V813M379.5 740V840M380.5 741V902M381.5 742V818M382.5 744V816M383.5 742V823M384.5 743V815M385.5 743V835M386.5 746V835M387.5 741V849M388.5 744V820M389.5 742V822M390.5 740V829M391.5 740V835M392.5 745V828M393.5 746V816M394.5 739V822M395.5 741V815M396.5 743V811M397.5 747V823M398.5 744V819M399.5 745V818M400.5 745V814M401.5 747V858M402.5 743V839M403.5 747V815M404.5 751V833M405.5 752V821M406.5 744V808M407.5 745V818M408.5 742V814M409.5 751V829M410.5 740V840M411.5 746V799M412.5 748V841M413.5 746V847M414.5 744V840M415.5 745V823M416.5 747V817M417.5 745V792M418.5 744V801M419.5 742V793M420.5 746V788M421.5 740V785M422.5 746V799M423.5 742V805M424.5 740V813M425.5 745V809M426.5 744V824M427.5 739V820M428.5 750V811M429.5 749V799M430.5 745V818M431.5 747V850M432.5 744V834M433.5 747V818M434.5 743V819M435.5 749V819M436.5 749V800M437.5 743V791M438.5 737V798M439.5 730V798M440.5 751V791M441.5 746V801M442.5 745V824M443.5 744V812M444.5 752V873M445.5 740V829M446.5 742V851M447.5 740V832M448.5 748V839M449.5 744V821M450.5 741V838M451.5 745V850M452.5 743V817M453.5 738V811M454.5 746V794M455.5 743V814M456.5 744V828M457.5 745V783M458.5 741V834M459.5 745V784M460.5 748V814M461.5 742V813M462.5 746V817M463.5 747V807M464.5 745V797M465.5 747V814M466.5 744V796M467.5 742V781M468.5 747V793M469.5 749V787M470.5 747V793M471.5 742V791M472.5 743V794M473.5 744V797M474.5 746V813M475.5 743V836M476.5 745V808M477.5 745V831M478.5 740V809M479.5 748V806M480.5 745V799M481.5 743V796M482.5 745V791M483.5 742V793M484.5 741V794M485.5 746V792M486.5 745V800M487.5 754V817M488.5 754V810M489.5 747V795M490.5 747V797M491.5 748V817M492.5 745V802M493.5 746V833M494.5 739V852M495.5 745V840M496.5 743V800M497.5 746V812M498.5 739V806M499.5 744V797M500.5 743V784M501.5 742V799M502.5 750V802M503.5 748V802M504.5 744V792M505.5 750V812M506.5 750V794M507.5 744V811M508.5 747V795M509.5 739V830M510.5 748V789M511.5 748V793M512.5 746V785M513.5 744V794M514.5 743V793M515.5 746V810M516.5 739V798M517.5 747V831M518.5 741V793M519.5 748V795M520.5 745V793M521.5 741V790M522.5 746V785M523.5 742V782M524.5 748V794M525.5 740V808M526.5 745V796M527.5 750V789M528.5 743V810M529.5 746V798M530.5 749V792M531.5 740V806M532.5 742V825M533.5 751V799M534.5 739V798M535.5 746V833M536.5 743V799M537.5 740V817M538.5 746V810M539.5 743V811M540.5 748V792M541.5 740V816M542.5 742V820M543.5 748V814M544.5 740V825M545.5 743V836M546.5 745V812M547.5 746V829M548.5 745V824M549.5 747V800M550.5 744V798M551.5 745V805M552.5 745V846M553.5 737V790M554.5 748V822M555.5 749V825M556.5 743V831M557.5 740V856M558.5 748V853M559.5 740V838M560.5 742V787M561.5 738V784M562.5 747V786M563.5 745V793M564.5 743V831M565.5 744V795M566.5 747V795M567.5 744V795M568.5 742V787M569.5 747V787M570.5 745V804M571.5 744V795M572.5 742V800M573.5 747V803M574.5 747V806M575.5 739V815M576.5 747V867M577.5 746V823M578.5 744V800M579.5 743V797M580.5 744V814M581.5 742V804M582.5 747V828M583.5 748V816M584.5 744V790M585.5 745V812M586.5 737V835M587.5 740V791M588.5 739V851M589.5 740V796M590.5 746V800M591.5 748V823M592.5 740V796M593.5 741V810M594.5 750V782M595.5 743V794M596.5 745V789M597.5 744V819M598.5 747V785M599.5 746V788M600.5 741V793M601.5 741V790M602.5 742V804M603.5 738V864M604.5 746V792M605.5 742V805M606.5 743V803M607.5 749V791M608.5 743V788M609.5 740V791M610.5 744V818M611.5 744V798M612.5 741V823M613.5 740V816M614.5 745V794M615.5 743V793M616.5 748V785M617.5 736V802M618.5 738V864M619.5 743V786M620.5 744V802M621.5 745V828M622.5 753V800M623.5 751V816M624.5 745V802M625.5 748V807M626.5 743V823M627.5 740V815M628.5 747V819M629.5 740V811M630.5 748V826M631.5 750V791M632.5 747V796M633.5 741V810M634.5 746V826M635.5 752V818M636.5 745V812M637.5 741V845M638.5 746V820M639.5 740V849M640.5 749V839M641.5 746V859M642.5 745V847M643.5 742V860M644.5 746V855M645.5 752V839M646.5 744V890M647.5 749V846M648.5 743V855M649.5 747V861M650.5 745V834M651.5 747V829M652.5 748V851M653.5 742V834M654.5 745V855M655.5 746V839M656.5 747V847M657.5 741V856M658.5 747V885M659.5 747V831M660.5 741V830M661.5 746V839M662.5 747V853M663.5 739V842M664.5 748V836M665.5 750V847M666.5 745V842M667.5 746V860M668.5 746V832M669.5 749V847M670.5 741V860M671.5 746V832M672.5 745V826M673.5 747V835M674.5 740V834M675.5 739V870M676.5 747V865M677.5 752V857M678.5 749V908M679.5 743V887M680.5 741V894M681.5 746V856M682.5 745V880M683.5 739V857M684.5 742V854M685.5 744V837M686.5 745V838M687.5 751V823M688.5 745V837M689.5 749V854M690.5 743V809M691.5 742V791M692.5 739V784M693.5 743V820M694.5 743V795M695.5 744V788M696.5 747V795M697.5 744V785M698.5 740V793M699.5 739V816M700.5 744V797M701.5 740V789M702.5 752V789M703.5 745V787M704.5 742V793M705.5 743V794M706.5 740V815M707.5 746V796M708.5 746V793M709.5 741V789M710.5 747V856M711.5 740V792M712.5 746V790M713.5 742V827M714.5 746V800M715.5 743V794M716.5 741V788M717.5 742V815M718.5 740V830M719.5 744V816M720.5 747V855M721.5 749V823M722.5 745V834M723.5 744V838M724.5 750V856M725.5 742V849M726.5 742V828M727.5 743V874M728.5 741V868M729.5 744V908M730.5 746V862M731.5 744V865M732.5 740V859M733.5 741V874M734.5 744V822M735.5 737V840M736.5 749V844M737.5 748V849M738.5 745V861M739.5 740V833M740.5 745V832M741.5 747V825M742.5 744V819M743.5 739V816M744.5 746V812M745.5 744V824M746.5 746V845M747.5 742V819M748.5 742V811M749.5 742V848M750.5 742V805M751.5 741V830M752.5 745V865M753.5 739V803M754.5 751V803M755.5 737V796M756.5 749V875M757.5 744V785M758.5 747V795M759.5 744V791M760.5 745V790M761.5 743V796M762.5 746V791M763.5 745V800M764.5 742V798M765.5 742V798M766.5 744V854M767.5 746V806M768.5 744V823M769.5 746V810M770.5 742V822M771.5 744V832M772.5 745V809M773.5 745V812M774.5 751V809M775.5 747V822M776.5 740V811M777.5 749V850M778.5 746V816M779.5 746V854M780.5 750V823M781.5 746V816M782.5 747V824M783.5 749V796M784.5 743V791M785.5 747V809M786.5 748V822M787.5 739V792M788.5 745V792M789.5 749V791M790.5 745V816M791.5 746V790M792.5 739V786M793.5 749V801M794.5 741V790M795.5 744V788M796.5 748V785M797.5 746V796M798.5 743V786M799.5 746V789M800.5 747V788M801.5 745V789M802.5 737V784M803.5 743V791M804.5 744V795M805.5 746V790M806.5 742V795M807.5 742V788M808.5 747V788M809.5 747V794M810.5 751V784M811.5 751V785M812.5 740V791M813.5 743V793M814.5 740V794M815.5 741V790M816.5 747V793M817.5 746V786M818.5 742V787M819.5 745V792M820.5 742V788M821.5 750V783M822.5 748V809M823.5 743V807M824.5 745V830M825.5 742V837M826.5 745V870M827.5 743V851M828.5 737V919M829.5 744V879M830.5 747V884M831.5 748V876M832.5 742V898M833.5 742V888M834.5 742V899M835.5 751V905M836.5 745V902M837.5 742V902M838.5 741V910M839.5 749V875M840.5 744V933M841.5 737V867M842.5 747V870M843.5 743V877M844.5 744V825M845.5 742V824M846.5 746V824M847.5 739V833M848.5 745V819M849.5 744V820M850.5 747V814M851.5 747V813M852.5 745V795M853.5 753V790M854.5 745V822M855.5 745V807M856.5 740V816M857.5 742V809M858.5 744V797M859.5 742V814M860.5 745V856M861.5 748V803M862.5 743V803M863.5 744V809M864.5 748V795M865.5 742V792M866.5 743V795M867.5 745V790M868.5 746V816M869.5 746V797M870.5 744V790M871.5 742V794M872.5 748V787M873.5 744V799M874.5 742V789M875.5 745V788M876.5 746V805M877.5 744V787M878.5 747V820M879.5 747V835M880.5 744V813M881.5 748V850M882.5 738V830M883.5 747V826M884.5 747V828M885.5 741V853M886.5 741V848M887.5 747V828M888.5 750V824M889.5 743V833M890.5 742V820M891.5 746V822M892.5 744V824M893.5 743V826M894.5 739V825M895.5 744V855M896.5 751V859M897.5 746V847M898.5 748V843M899.5 744V857M900.5 745V836M901.5 745V819M902.5 740V833M903.5 747V815M904.5 744V800M905.5 736V806M906.5 742V801M907.5 748V787M908.5 743V797M909.5 745V848M910.5 747V800M911.5 747V884M912.5 742V845M913.5 743V815M914.5 751V822M915.5 748V807M916.5 747V809M917.5 740V856M918.5 747V811M919.5 744V842M920.5 745V849M921.5 750V808M922.5 747V821M923.5 740V822M924.5 744V831M925.5 740V845M926.5 751V835M927.5 745V908M928.5 736V832M929.5 741V840M930.5 745V824M931.5 750V867M932.5 744V837M933.5 745V850M934.5 741V849M935.5 740V867M936.5 749V879M937.5 743V911M938.5 740V911M939.5 744V902M940.5 743V889M941.5 747V886M942.5 741V880M943.5 745V876M944.5 743V854M945.5 746V861M946.5 745V862M947.5 750V876M948.5 741V840M949.5 741V832M950.5 745V831M951.5 739V860M952.5 743V824M953.5 749V893M954.5 744V842M955.5 745V817M956.5 743V829M957.5 748V829M958.5 746V817M959.5 736V824M960.5 746V830M961.5 749V806M962.5 741V798M963.5 743V808M964.5 745V842M965.5 746V848M966.5 742V818M967.5 746V906M968.5 735V814M969.5 744V819M970.5 747V824M971.5 745V814M972.5 744V818M973.5 747V881M974.5 738V825M975.5 741V837M976.5 747V826M977.5 741V845M978.5 748V856M979.5 742V866M980.5 744V837M981.5 743V829M982.5 742V825M983.5 745V831M984.5 749V856M985.5 740V865M986.5 743V849M987.5 743V846M988.5 746V840M989.5 742V836M990.5 748V825M991.5 743V837M992.5 746V855M993.5 743V860M994.5 746V876M995.5 749V855M996.5 745V854M997.5 748V888M998.5 742V858M999.5 745V877M1000.5 740V861M1001.5 744V851M1002.5 748V835M1003.5 745V827M1004.5 740V830M1005.5 740V814M1006.5 742V805M1007.5 742V803M1008.5 740V809M1009.5 742V811M1010.5 742V800M1011.5 745V815M1012.5 743V804M1013.5 746V793M1014.5 750V806M1015.5 744V791M1016.5 741V788M1017.5 742V796M1018.5 746V832M1019.5 742V826M1020.5 742V845M1021.5 739V884M1022.5 747V844M1023.5 742V841M1024.5 745V871M1025.5 738V944M1026.5 746V881M1027.5 745V854M1028.5 737V850M1029.5 737V856M1030.5 742V864M1031.5 747V898M1032.5 745V887M1033.5 749V899M1034.5 743V872M1035.5 744V899M1036.5 744V894M1037.5 746V890M1038.5 746V881M1039.5 749V881M1040.5 743V874M1041.5 745V887M1042.5 746V893M1043.5 751V879M1044.5 745V868M1045.5 741V875M1046.5 739V898M1047.5 741V869M1048.5 743V887M1049.5 741V879M1050.5 748V878M1051.5 742V904M1052.5 747V864M1053.5 746V854M1054.5 742V839M1055.5 747V834M1056.5 745V846M1057.5 743V824M1058.5 744V808M1059.5 741V830M1060.5 740V821M1061.5 743V844M1062.5 749V854M1063.5 741V820M1064.5 746V846M1065.5 741V833M1066.5 740V871M1067.5 745V842M1068.5 743V832M1069.5 744V841M1070.5 749V851M1071.5 746V842M1072.5 744V896M1073.5 742V873M1074.5 740V865M1075.5 742V864M1076.5 742V865M1077.5 745V869M1078.5 747V881M1079.5 743V871M1080.5 749V861M1081.5 743V892M1082.5 748V899M1083.5 745V913M1084.5 742V864M1085.5 746V872M1086.5 747V852M1087.5 742V839M1088.5 740V861M1089.5 746V852M1090.5 747V867M1091.5 747V887M1092.5 744V868M1093.5 748V893M1094.5 740V921M1095.5 743V875M1096.5 746V850M1097.5 745V886M1098.5 738V858M1099.5 743V839M1100.5 743V814M1101.5 747V834M1102.5 743V821M1103.5 745V831M1104.5 746V841M1105.5 744V846M1106.5 745V884M1107.5 745V847M1108.5 743V822M1109.5 746V822M1110.5 742V836M1111.5 744V832M1112.5 749V831M1113.5 750V868M1114.5 741V827M1115.5 735V855M1116.5 744V839M1117.5 745V849M1118.5 749V842M1119.5 741V834M1120.5 746V844M1121.5 745V843M1122.5 742V847M1123.5 744V845M1124.5 746V830M1125.5 744V818M1126.5 744V825M1127.5 745V830M1128.5 742V843M1129.5 746V847M1130.5 745V848M1131.5 740V850M1132.5 744V848M1133.5 744V869M1134.5 741V843M1135.5 750V854M1136.5 746V865M1137.5 743V864M1138.5 741V884M1139.5 750V863M1140.5 741V863M1141.5 750V858M1142.5 739V878M1143.5 751V865M1144.5 747V873M1145.5 743V864M1146.5 744V859M1147.5 746V861M1148.5 742V844M1149.5 745V840M1150.5 745V833M1151.5 741V839M1152.5 741V832M1153.5 737V818M1154.5 743V809M1155.5 748V818M1156.5 740V818M1157.5 747V815M1158.5 748V859M1159.5 741V810M1160.5 744V811M1161.5 742V803M1162.5 738V812M1163.5 742V820M1164.5 742V799M1165.5 745V802M1166.5 747V842M1167.5 745V795M1168.5 742V792M1169.5 746V792M1170.5 742V796M1171.5 742V785M1172.5 745V796M1173.5 743V794M1174.5 747V813M1175.5 748V826M1176.5 746V812M1177.5 743V825M1178.5 743V820M1179.5 745V854M1180.5 744V833M1181.5 743V829M1182.5 746V847M1183.5 738V822M1184.5 742V820M1185.5 746V836M1186.5 741V806M1187.5 744V808M1188.5 740V806M1189.5 741V805M1190.5 744V795M1191.5 741V793M1192.5 742V788M1193.5 746V835M1194.5 742V797M1195.5 742V863M1196.5 749V789M1197.5 744V798M1198.5 744V791M1199.5 743V828M1200.5 742V790M1201.5 742V790M1202.5 748V838M1203.5 746V796M1204.5 742V854M1205.5 748V799M1206.5 746V849M1207.5 741V818M1208.5 743V826M1209.5 747V839M1210.5 751V827M1211.5 744V812M1212.5 741V837M1213.5 749V822M1214.5 743V840M1215.5 745V845M1216.5 741V889M1217.5 743V851M1218.5 739V869M1219.5 744V862M1220.5 745V896M1221.5 745V878M1222.5 746V848M1223.5 738V847M1224.5 748V845M1225.5 744V856M1226.5 746V829M1227.5 739V855M1228.5 742V857M1229.5 737V863M1230.5 747V841M1231.5 747V848M1232.5 740V821M1233.5 749V811M1234.5 746V848M1235.5 745V824M1236.5 745V821M1237.5 745V833M1238.5 744V844M1239.5 736V835M1240.5 742V825M1241.5 749V830M1242.5 751V817M1243.5 745V806M1244.5 746V796M1245.5 751V806M1246.5 745V823M1247.5 748V843M1248.5 750V816M1249.5 742V823M1250.5 744V847M1251.5 742V826M1252.5 743V850M1253.5 742V833M1254.5 745V828M1255.5 743V827M1256.5 747V826M1257.5 744V825M1258.5 744V804M1259.5 742V789M1260.5 741V795M1261.5 739V790M1262.5 747V788M1263.5 744V784M1264.5 747V795M1265.5 738V790M1266.5 742V785M1267.5 743V805M1268.5 743V836M1269.5 743V818M1270.5 749V789M1271.5 748V789M1272.5 744V790M1273.5 745V803M1274.5 747V784M1275.5 740V787M1276.5 747V782M1277.5 742V805M1278.5 744V787M1279.5 740V812M1280.5 740V809M1281.5 745V802M1282.5 746V813M1283.5 746V812M1284.5 743V825M1285.5 742V832M1286.5 745V827M1287.5 739V823M1288.5 744V804M1289.5 746V825M1290.5 747V799M1291.5 740V825M1292.5 745V840M1293.5 742V849M1294.5 740V852M1295.5 743V859M1296.5 749V864M1297.5 744V846M1298.5 738V857M1299.5 749V843M1300.5 749V844M1301.5 749V850M1302.5 743V855M1303.5 744V842M1304.5 749V837M1305.5 741V822M1306.5 741V830M1307.5 744V872M1308.5 747V874M1309.5 746V829M1310.5 744V833M1311.5 745V854M1312.5 742V843M1313.5 745V847M1314.5 741V838M1315.5 740V871M1316.5 748V855M1317.5 740V855M1318.5 739V839M1319.5 746V864M1320.5 747V870M1321.5 746V852M1322.5 737V870M1323.5 745V853M1324.5 751V853M1325.5 740V911M1326.5 742V861M1327.5 741V857M1328.5 744V864M1329.5 745V870M1330.5 746V858M1331.5 742V874M1332.5 748V862M1333.5 744V877M1334.5 737V895M1335.5 748V876M1336.5 745V856M1337.5 745V926M1338.5 743V862M1339.5 738V841M1340.5 748V862M1341.5 747V876M1342.5 741V878M1343.5 746V883M1344.5 743V847M1345.5 741V882M1346.5 749V854M1347.5 749V866M1348.5 745V933M1349.5 745V907M1350.5 743V863M1351.5 744V866M1352.5 747V905M1353.5 743V891M1354.5 743V873M1355.5 742V909M1356.5 745V916M1357.5 740V871M1358.5 747V860M1359.5 740V856M1360.5 743V863M1361.5 745V909M1362.5 744V856M1363.5 746V885M1364.5 750V907M1365.5 747V871M1366.5 737V913M1367.5 740V884M1368.5 746V915M1369.5 746V855M1370.5 744V884M1371.5 752V879M1372.5 748V869M1373.5 741V859M1374.5 743V869M1375.5 742V882M1376.5 740V934M1377.5 744V881M1378.5 751V859M1379.5 741V859M1380.5 741V856M1381.5 747V852M1382.5 739V864M1383.5 746V838M1384.5 741V862M1385.5 740V835M1386.5 739V854M1387.5 745V840M1388.5 746V873M1389.5 743V839M1390.5 737V809M1391.5 747V818M1392.5 739V857M1393.5 745V825M1394.5 744V826M1395.5 742V828M1396.5 748V827M1397.5 738V866M1398.5 739V871M1399.5 744V863M1400.5 746V852M1401.5 745V839M1402.5 746V827M1403.5 746V827M1404.5 745V839M1405.5 745V845M1406.5 746V830M1407.5 738V829M1408.5 747V831M1409.5 739V833M1410.5 750V834M1411.5 750V826M1412.5 740V819M1413.5 742V824M1414.5 746V825M1415.5 739V827M1416.5 742V836M1417.5 740V840M1418.5 741V877M1419.5 743V835M1420.5 746V876M1421.5 743V892M1422.5 748V816M1423.5 745V827M1424.5 745V845M1425.5 744V849M1426.5 743V832M1427.5 742V867M1428.5 746V861M1429.5 740V871M1430.5 741V877M1431.5 742V867M1432.5 748V856M1433.5 745V885M1434.5 746V860M1435.5 737V857M1436.5 745V847M1437.5 744V917M1438.5 751V853M1439.5 752V865M1440.5 748V886M1441.5 747V902M1442.5 745V868M1443.5 749V896M1444.5 746V859M1445.5 744V845M1446.5 747V847M1447.5 744V846M1448.5 747V853M1449.5 741V855M1450.5 745V838M1451.5 742V830M1452.5 742V848M1453.5 745V844M1454.5 741V816M1455.5 746V813M1456.5 748V836M1457.5 743V819M1458.5 739V828M1459.5 744V818M1460.5 746V843M1461.5 744V852M1462.5 742V812M1463.5 745V845M1464.5 747V823M1465.5 742V833M1466.5 743V829M1467.5 749V821M1468.5 741V817M1469.5 744V823M1470.5 744V845M1471.5 752V835M1472.5 744V844M1473.5 739V845M1474.5 745V848M1475.5 739V821M1476.5 743V848M1477.5 743V832M1478.5 741V816M1479.5 744V801M1480.5 743V828M1481.5 746V813M1482.5 741V830M1483.5 745V816M1484.5 739V806M1485.5 741V813M1486.5 746V826M1487.5 750V894M1488.5 740V834M1489.5 744V839M1490.5 743V849M1491.5 743V867M1492.5 746V886M1493.5 747V866M1494.5 743V842M1495.5 741V842M1496.5 746V844M1497.5 741V860M1498.5 743V889M1499.5 744V884M1500.5 748V870M1501.5 747V880M1502.5 740V894M1503.5 739V904M1504.5 742V922M1505.5 746V867M1506.5 750V863M1507.5 742V849M1508.5 747V847M1509.5 741V843M1510.5 741V895M1511.5 745V827M1512.5 738V819M1513.5 744V829M1514.5 749V816M1515.5 744V834M1516.5 750V819M1517.5 746V848M1518.5 741V814M1519.5 747V825M1520.5 740V842M1521.5 745V819M1522.5 745V851M1523.5 745V800M1524.5 750V789M1525.5 744V862M1526.5 742V797M1527.5 742V796M1528.5 752V818M1529.5 743V813M1530.5 744V828M1531.5 743V803M1532.5 750V809M1533.5 745V904M1534.5 738V838M1535.5 742V853M1536.5 748V829M1537.5 742V835M1538.5 744V828M1539.5 749V857M1540.5 743V837M1541.5 743V822M1542.5 744V834M1543.5 743V837M1544.5 743V835M1545.5 747V856M1546.5 745V852M1547.5 746V846M1548.5 745V836M1549.5 748V861M1550.5 744V853M1551.5 750V866M1552.5 738V819M1553.5 743V819M1554.5 745V805M1555.5 742V876M1556.5 742V826M1557.5 741V818M1558.5 741V831M1559.5 745V830M1560.5 746V829M1561.5 743V810M1562.5 745V829M1563.5 748V821M1564.5 747V794M1565.5 744V784M1566.5 747V816M1567.5 744V789M1568.5 748V790M1569.5 742V793M1570.5 746V790M1571.5 745V788M1572.5 743V805M1573.5 742V792M1574.5 744V802M1575.5 747V799M1576.5 746V811M1577.5 743V795M1578.5 745V852M1579.5 744V816M1580.5 745V840M1581.5 743V810M1582.5 748V799M1583.5 744V812M1584.5 748V802M1585.5 741V864M1586.5 747V860M1587.5 745V806M1588.5 748V897M1589.5 745V815M1590.5 745V859M1591.5 737V854M1592.5 750V887M1593.5 746V876M1594.5 749V868M1595.5 748V843M1596.5 742V867M1597.5 737V874M1598.5 745V864M1599.5 741V898M1600.5 747V890M1601.5 745V881M1602.5 746V870M1603.5 739V892M1604.5 750V862M1605.5 745V899M1606.5 746V843M1607.5 745V835M1608.5 739V846M1609.5 748V882M1610.5 741V867M1611.5 742V865M1612.5 744V872M1613.5 751V895M1614.5 741V836M1615.5 749V862M1616.5 748V849M1617.5 748V865M1618.5 749V812M1619.5 744V802M1620.5 742V804M1621.5 744V812M1622.5 742V827M1623.5 742V849M1624.5 742V843M1625.5 748V903M1626.5 743V818M1627.5 747V806M1628.5 747V823M1629.5 745V816M1630.5 740V834M1631.5 742V837M1632.5 740V836M1633.5 751V853M1634.5 748V862M1635.5 741V841M1636.5 741V883M1637.5 743V857M1638.5 748V900M1639.5 743V835M1640.5 740V872M1641.5 745V834M1642.5 742V825M1643.5 746V827M1644.5 743V825M1645.5 747V818M1646.5 742V843M1647.5 741V818M1648.5 747V823M1649.5 746V786M1650.5 745V812M1651.5 748V799M1652.5 744V824M1653.5 740V817M1654.5 744V810M1655.5 749V796M1656.5 742V815M1657.5 746V822M1658.5 743V832M1659.5 749V804M1660.5 744V803M1661.5 746V803M1662.5 747V801M1663.5 744V800M1664.5 742V794M1665.5 742V813M1666.5 745V792M1667.5 741V790M1668.5 746V801M1669.5 743V808M1670.5 743V792M1671.5 744V799M1672.5 745V799M1673.5 744V810M1674.5 743V836M1675.5 747V829M1676.5 750V829M1677.5 744V817M1678.5 743V837M1679.5 742V861M1680.5 742V845M1681.5 743V853M1682.5 739V887M1683.5 740V878M1684.5 746V871M1685.5 739V857M1686.5 749V911M1687.5 740V888M1688.5 743V895M1689.5 748V910M1690.5 743V971M1691.5 746V939M1692.5 742V913M1693.5 739V916M1694.5 743V930M1695.5 745V953M1696.5 746V926M1697.5 748V957M1698.5 741V945M1699.5 745V971M1700.5 747V951M1701.5 745V957M1702.5 745V966M1703.5 746V917M1704.5 747V912M1705.5 742V869M1706.5 743V854M1707.5 740V838M1708.5 742V825M1709.5 744V826M1710.5 749V829M1711.5 742V828M1712.5 741V817M1713.5 746V790M1714.5 749V833M1715.5 749V790M1716.5 745V819M1717.5 743V779M1718.5 739V792M1719.5 745V830M1720.5 741V790M1721.5 743V820M1722.5 741V811M1723.5 745V850M1724.5 747V828M1725.5 746V822M1726.5 744V843M1727.5 744V844M1728.5 745V826M1729.5 745V827M1730.5 748V807M1731.5 747V848M1732.5 749V811M1733.5 745V798M1734.5 749V818M1735.5 743V816M1736.5 744V824M1737.5 747V798M1738.5 742V793M1739.5 747V802M1740.5 746V799M1741.5 741V822M1742.5 741V836M1743.5 744V856M1744.5 741V832M1745.5 738V830M1746.5 744V814M1747.5 746V815M1748.5 743V833M1749.5 749V791M1750.5 737V812M1751.5 742V805M1752.5 747V815M1753.5 742V825M1754.5 746V820M1755.5 751V821M1756.5 744V839M1757.5 748V857M1758.5 741V823M1759.5 749V803M1760.5 745V801M1761.5 750V799M1762.5 744V803M1763.5 740V793M1764.5 742V793M1765.5 743V797M1766.5 740V848M1767.5 743V815M1768.5 744V830M1769.5 748V816M1770.5 743V826M1771.5 744V849M1772.5 745V819M1773.5 747V815M1774.5 749V887M1775.5 741V831M1776.5 741V839M1777.5 744V834M1778.5 742V817M1779.5 739V810M1780.5 750V797M1781.5 748V811M1782.5 746V816M1783.5 740V807M1784.5 747V820M1785.5 741V827M1786.5 750V835M1787.5 741V873M1788.5 745V844M1789.5 741V887M1790.5 742V832M1791.5 743V837M1792.5 746V843M1793.5 743V838M1794.5 743V837M1795.5 749V825M1796.5 743V868M1797.5 747V827M1798.5 748V800M1799.5 743V794M1800.5 748V790M1801.5 745V791M1802.5 744V808M1803.5 739V861M1804.5 746V827M1805.5 751V833M1806.5 740V834M1807.5 744V832M1808.5 740V855M1809.5 737V848M1810.5 746V846M1811.5 747V865M1812.5 747V839M1813.5 747V834M1814.5 743V860M1815.5 746V875M1816.5 744V840M1817.5 746V840M1818.5 744V860M1819.5 743V839M1820.5 747V834M1821.5 745V843M1822.5 745V857M1823.5 748V879M1824.5 741V845M1825.5 743V825M1826.5 745V863M1827.5 739V853M1828.5 746V876M1829.5 747V845M1830.5 749V860M1831.5 744V846M1832.5 744V870M1833.5 748V859M1834.5 743V837M1835.5 744V848M1836.5 743V836M1837.5 749V833M1838.5 747V845M1839.5 750V834M1840.5 740V857M1841.5 746V846M1842.5 742V869M1843.5 736V862M1844.5 745V876M1845.5 749V880M1846.5 743V903M1847.5 748V862M1848.5 746V858M1849.5 742V861M1850.5 740V865M1851.5 746V877M1852.5 747V863M1853.5 743V866M1854.5 749V886M1855.5 741V881M1856.5 749V877M1857.5 743V873M1858.5 741V855M1859.5 746V911M1860.5 745V854M1861.5 746V876M1862.5 739V881M1863.5 741V858M1864.5 746V859M1865.5 736V886M1866.5 750V854M1867.5 742V865M1868.5 746V841M1869.5 746V859M1870.5 743V859M1871.5 745V843M1872.5 743V845M1873.5 745V831M1874.5 745V856M1875.5 747V873M1876.5 743V880M1877.5 743V868M1878.5 751V870M1879.5 748V860M1880.5 743V898M1881.5 744V841M1882.5 742V853M1883.5 747V846M1884.5 739V821M1885.5 748V812M1886.5 741V821M1887.5 745V829M1888.5 741V806M1889.5 739V790M1890.5 747V790M1891.5 743V801M1892.5 747V801M1893.5 743V838M1894.5 743V807M1895.5 745V785M1896.5 741V800M1897.5 743V809M1898.5 744V829M1899.5 749V798M1900.5 749V808M1901.5 744V811M1902.5 744V829M1903.5 748V824" stroke="#ff0000" stroke-width="1" fill="none"/><path d="M144.5 849V964M149.5 847V885M150.5 839V965M155.5 861V961M161.5 851V956M162.5 854V916M163.5 849V955M166.5 888V963M172.5 830V846M178.5 790V944M184.5 855V960M192.5 847V916M200.5 827V848M203.5 804V951M205.5 800V830M209.5 804V916M216.5 847V968M218.5 855V961M222.5 861V966M240.5 846V955M244.5 836V865M246.5 833V872M252.5 858V908M254.5 840V858M258.5 832V955M261.5 789V841M262.5 817V955M279.5 861V935M280.5 840V934M281.5 842V950M283.5 853V916M293.5 850V967M298.5 868V920M301.5 839V954M308.5 853V881M310.5 899V962M311.5 868V966M312.5 865V970M313.5 867V966M314.5 859V964M317.5 855V962M318.5 868V957M319.5 886V967M320.5 905V967M321.5 916V963M322.5 897V958M324.5 902V960M325.5 890V960M326.5 880V954M327.5 884V957M328.5 868V967M329.5 886V968M331.5 863V955M332.5 882V948M333.5 903V963M334.5 886V952M335.5 879V946M336.5 880V962M337.5 906V962M339.5 893V943M340.5 916V948M351.5 825V867M360.5 791V895M361.5 803V870M363.5 792V926M367.5 802V822M371.5 832V876M372.5 840V953M384.5 815V891M385.5 835V966M400.5 814V900M401.5 858V953M402.5 839V854M403.5 815V935M404.5 833V957M413.5 847V944M415.5 823V842M417.5 792V891M421.5 785V967M422.5 799V878M424.5 813V964M428.5 811V945M441.5 801V963M447.5 832V964M450.5 838V882M451.5 850V951M452.5 817V921M460.5 814V951M466.5 796V962M469.5 787V885M471.5 791V863M474.5 813V959M475.5 836V912M483.5 793V925M487.5 817V963M488.5 810V903M491.5 817V966M501.5 799V905M502.5 802V951M512.5 785V963M513.5 794V955M516.5 798V929M525.5 808V959M528.5 810V883M533.5 799V964M537.5 817V936M555.5 825V888M564.5 831V879M565.5 795V901M570.5 804V884M577.5 823V853M581.5 804V854M584.5 790V882M598.5 785V953M601.5 790V959M604.5 792V950M613.5 816V954M615.5 793V958M620.5 802V939M622.5 800V938M625.5 807V863M629.5 811V939M630.5 826V958M634.5 826V942M639.5 849V864M640.5 839V965M647.5 846V886M656.5 847V875M664.5 836V886M665.5 847V934M668.5 832V962M669.5 847V878M670.5 860V968M672.5 826V931M674.5 834V906M678.5 908V970M685.5 837V950M690.5 809V966M697.5 785V805M699.5 816V957M701.5 789V920M704.5 793V913M709.5 789V897M712.5 790V858M720.5 855V887M726.5 828V915M736.5 844V950M737.5 849V970M740.5 832V958M745.5 824V879M748.5 811V903M752.5 865V931M758.5 795V961M761.5 796V896M767.5 806V968M774.5 809V886M783.5 796V889M785.5 809V952M813.5 793V877M815.5 790V962M818.5 787V962M821.5 783V965M824.5 830V960M825.5 837V966M831.5 876V966M833.5 888V936M834.5 899V955M835.5 905V946M836.5 902V954M838.5 910V961M839.5 875V954M840.5 933V955M841.5 867V935M848.5 819V969M852.5 795V833M854.5 822V849M857.5 809V956M859.5 814V901M860.5 856V944M867.5 790V956M868.5 816V957M873.5 799V963M881.5 850V965M889.5 833V961M899.5 857V956M902.5 833V970M904.5 800V969M912.5 845V961M914.5 822V951M922.5 821V927M932.5 837V955M939.5 902V917M941.5 886V960M944.5 854V958M951.5 860V919M954.5 842V969M960.5 830V852M963.5 808V852M966.5 818V962M972.5 818V883M979.5 866V938M980.5 837V912M988.5 840V956M1000.5 861V952M1005.5 814V960M1007.5 803V965M1009.5 811V957M1014.5 806V967M1016.5 788V971M1025.5 944V965M1029.5 856V971M1039.5 881V937M1041.5 887V952M1044.5 868V960M1054.5 839V888M1063.5 820V908M1066.5 871V955M1074.5 865V899M1079.5 871V964M1084.5 864V953M1093.5 893V947M1096.5 850V919M1099.5 839V868M1111.5 832V959M1138.5 884V964M1139.5 863V967M1142.5 878V899M1148.5 844V888M1153.5 818V941M1159.5 810V966M1162.5 812V904M1166.5 842V923M1168.5 792V863M1171.5 785V966M1177.5 825V961M1183.5 822V909M1187.5 808V833M1197.5 798V953M1200.5 790V952M1201.5 790V966M1202.5 838V946M1209.5 839V876M1213.5 822V839M1218.5 869V952M1221.5 878V964M1227.5 855V967M1231.5 848V966M1238.5 844V950M1241.5 830V860M1253.5 833V959M1256.5 826V855M1260.5 795V955M1262.5 788V919M1270.5 789V879M1277.5 805V960M1278.5 787V950M1284.5 825V953M1285.5 832V937M1289.5 825V964M1296.5 864V921M1311.5 854V956M1319.5 864V907M1323.5 853V934M1324.5 853V956M1334.5 895V957M1335.5 876V950M1338.5 862V895M1340.5 862V958M1344.5 847V953M1360.5 863V881M1362.5 856V874M1376.5 934V953M1383.5 838V874M1389.5 839V967M1394.5 826V903M1398.5 871V966M1399.5 863V954M1403.5 827V886M1406.5 830V970M1413.5 824V932M1421.5 892V961M1444.5 859V966M1447.5 846V862M1457.5 819V928M1459.5 818V934M1461.5 852V969M1468.5 817V968M1474.5 848V908M1477.5 832V952M1479.5 801V962M1482.5 830V918M1500.5 870V960M1501.5 880V961M1503.5 904V971M1506.5 863V889M1509.5 843V952M1513.5 829V966M1518.5 814V848M1519.5 825V846M1521.5 819V915M1524.5 789V947M1546.5 852V913M1552.5 819V879M1568.5 790V849M1579.5 816V854M1590.5 859V936M1592.5 887V957M1593.5 876V966M1604.5 862V945M1615.5 862V931M1623.5 849V952M1627.5 806V847M1630.5 834V968M1633.5 853V934M1640.5 872V956M1643.5 827V953M1648.5 823V951M1651.5 799V866M1652.5 824V846M1659.5 804V958M1668.5 801V890M1675.5 829V959M1684.5 871V957M1685.5 857V936M1686.5 911V946M1687.5 888V949M1688.5 895V968M1689.5 910V965M1690.5 971V968M1691.5 939V965M1692.5 913V968M1695.5 953V966M1696.5 926V965M1697.5 957V970M1698.5 945V966M1699.5 971V968M1700.5 951V964M1701.5 957V960M1703.5 917V947M1717.5 779V961M1720.5 790V956M1728.5 826V857M1736.5 824V840M1737.5 798V900M1738.5 793V969M1747.5 815V956M1749.5 791V957M1751.5 805V952M1754.5 820V856M1764.5 793V954M1766.5 848V945M1767.5 815V950M1770.5 826V953M1772.5 819V950M1773.5 815V955M1776.5 839V950M1779.5 810V968M1780.5 797V920M1781.5 811V911M1786.5 835V886M1789.5 887V960M1791.5 837V950M1818.5 860V970M1824.5 845V887M1828.5 876V900M1831.5 846V885M1836.5 836V963M1848.5 858V914M1849.5 861V907M1854.5 886V970M1859.5 911V958M1860.5 854V873M1872.5 845V970M1882.5 853V886M1885.5 812V963M1891.5 801V953" stroke="#d01c1c" stroke-width="1" fill="none"/><path d="M139.5 722V763M140.5 724V747M141.5 722V747M142.5 728V746M143.5 726V763M144.5 731V751M145.5 727V747M146.5 733V749M147.5 730V758M148.5 730V748M149.5 719V748M150.5 727V757M151.5 718V753M152.5 724V747M153.5 722V750M154.5 722V753M155.5 725V744M156.5 726V754M157.5 718V749M158.5 719V750M159.5 723V751M160.5 724V770M161.5 727V747M162.5 730V750M163.5 727V747M164.5 721V750M165.5 726V753M166.5 719V745M167.5 727V751M168.5 726V757M169.5 729V749M170.5 733V751M171.5 731V758M172.5 725V745M173.5 725V746M174.5 727V749M175.5 718V744M176.5 715V749M177.5 725V746M178.5 724V761M179.5 726V750M180.5 723V750M181.5 714V760M182.5 723V761M183.5 720V744M184.5 725V752M185.5 730V768M186.5 724V776M187.5 715V745M188.5 720V745M189.5 719V747M190.5 719V747M191.5 720V764M192.5 723V752M193.5 722V754M194.5 720V743M195.5 724V751M196.5 723V744M197.5 721V745M198.5 716V742M199.5 715V775M200.5 718V770M201.5 722V750M202.5 725V750M203.5 724V746M204.5 719V745M205.5 722V774M206.5 715V744M207.5 719V748M208.5 717V745M209.5 724V754M210.5 726V752M211.5 727V747M212.5 728V746M213.5 724V759M214.5 728V758M215.5 723V750M216.5 719V757M217.5 723V745M218.5 727V750M219.5 720V750M220.5 728V745M221.5 728V773M222.5 725V761M223.5 720V755M224.5 721V747M225.5 722V746M226.5 716V747M227.5 726V770M228.5 723V755M229.5 728V755M230.5 729V746M231.5 727V771M232.5 730V749M233.5 733V754M234.5 733V761M235.5 735V753M236.5 728V755M237.5 729V753M238.5 727V751M239.5 734V755M240.5 734V768M241.5 740V755M242.5 744V758M243.5 731V760M244.5 732V748M245.5 722V743M246.5 717V751M247.5 718V748M248.5 725V761M249.5 725V758M250.5 732V753M251.5 732V752M252.5 732V751M253.5 738V751M254.5 738V759M255.5 729V762M256.5 726V750M257.5 720V745M258.5 719V744M259.5 714V749M260.5 716V748M261.5 725V756M262.5 720V774M263.5 726V745M264.5 722V748M265.5 728V746M266.5 725V748M267.5 726V752M268.5 723V751M269.5 729V758M270.5 722V752M271.5 724V747M272.5 725V750M273.5 725V758M274.5 729V755M275.5 726V751M276.5 725V752M277.5 726V760M278.5 712V753M279.5 728V753M280.5 724V749M281.5 729V755M282.5 735V757M283.5 731V757M284.5 731V775M285.5 735V755M286.5 728V751M287.5 726V750M288.5 725V758M289.5 720V750M290.5 725V747M291.5 725V752M292.5 725V756M293.5 729V752M294.5 726V752M295.5 730V749M296.5 717V768M297.5 726V772M298.5 716V755M299.5 719V754M300.5 728V753M301.5 728V751M302.5 726V752M303.5 719V750M304.5 730V758M305.5 725V761M306.5 726V750M307.5 718V749M308.5 728V749M309.5 720V749M310.5 725V756M311.5 725V755M312.5 720V754M313.5 723V747M314.5 734V765M315.5 731V749M316.5 730V756M317.5 730V770M318.5 730V750M319.5 732V759M320.5 718V749M321.5 721V745M322.5 722V750M323.5 728V746M324.5 726V747M325.5 724V782M326.5 724V750M327.5 717V746M328.5 724V747M329.5 710V747M330.5 723V748M331.5 722V752M332.5 720V745M333.5 726V744M334.5 720V753M335.5 718V746M336.5 722V749M337.5 725V750M338.5 727V766M339.5 730V749M340.5 725V756M341.5 727V746M342.5 710V745M343.5 731V768M344.5 724V751M345.5 730V748M346.5 721V759M347.5 718V749M348.5 725V749M349.5 727V752M350.5 719V778M351.5 716V743M352.5 719V746M353.5 721V744M354.5 715V747M355.5 725V779M356.5 719V776M357.5 710V749M358.5 726V754M359.5 732V763M360.5 735V757M361.5 735V755M362.5 729V760M363.5 727V749M364.5 729V764M365.5 724V755M366.5 731V789M367.5 735V752M368.5 734V755M369.5 731V750M370.5 731V749M371.5 729V750M372.5 724V748M373.5 719V752M374.5 724V747M375.5 727V756M376.5 724V767M377.5 722V753M378.5 722V753M379.5 719V748M380.5 733V748M381.5 725V747M382.5 719V747M383.5 721V754M384.5 727V746M385.5 728V774M386.5 729V769M387.5 727V757M388.5 714V751M389.5 717V748M390.5 721V742M391.5 721V743M392.5 716V768M393.5 722V747M394.5 717V751M395.5 718V759M396.5 715V753M397.5 714V749M398.5 713V741M399.5 715V745M400.5 714V745M401.5 717V756M402.5 713V749M403.5 716V747M404.5 717V761M405.5 716V744M406.5 719V745M407.5 717V762M408.5 727V752M409.5 733V748M410.5 718V762M411.5 716V758M412.5 729V765M413.5 730V756M414.5 722V769M415.5 734V753M416.5 727V750M417.5 726V748M418.5 732V758M419.5 730V748M420.5 730V757M421.5 730V754M422.5 726V754M423.5 731V752M424.5 728V746M425.5 733V749M426.5 726V757M427.5 731V748M428.5 733V756M429.5 729V750M430.5 727V750M431.5 723V751M432.5 708V741M433.5 708V752M434.5 722V750M435.5 718V752M436.5 720V745M437.5 719V750M438.5 729V756M439.5 737V754M440.5 730V751M441.5 733V761M442.5 733V790M443.5 732V752M444.5 731V766M445.5 716V745M446.5 722V756M447.5 726V748M448.5 728V753M449.5 725V760M450.5 726V776M451.5 725V754M452.5 728V748M453.5 728V748M454.5 723V759M455.5 738V756M456.5 729V757M457.5 739V753M458.5 735V762M459.5 729V771M460.5 728V749M461.5 720V760M462.5 726V751M463.5 728V749M464.5 718V748M465.5 716V759M466.5 716V743M467.5 719V744M468.5 704V743M469.5 720V749M470.5 726V750M471.5 721V747M472.5 724V748M473.5 724V767M474.5 714V761M475.5 725V755M476.5 728V756M477.5 734V761M478.5 731V750M479.5 732V751M480.5 727V754M481.5 729V757M482.5 731V756M483.5 723V754M484.5 730V764M485.5 734V763M486.5 730V749M487.5 729V757M488.5 726V752M489.5 724V760M490.5 710V752M491.5 711V744M492.5 720V751M493.5 722V753M494.5 725V749M495.5 725V746M496.5 727V758M497.5 728V758M498.5 725V750M499.5 725V769M500.5 726V750M501.5 730V747M502.5 732V749M503.5 732V748M504.5 732V753M505.5 726V747M506.5 720V752M507.5 718V755M508.5 723V747M509.5 722V751M510.5 731V759M511.5 728V750M512.5 721V759M513.5 709V753M514.5 714V744M515.5 698V739M516.5 709V742M517.5 710V751M518.5 716V753M519.5 710V749M520.5 709V740M521.5 716V744M522.5 711V748M523.5 712V746M524.5 721V768M525.5 717V741M526.5 713V748M527.5 706V743M528.5 713V760M529.5 719V748M530.5 721V750M531.5 725V752M532.5 723V749M533.5 728V749M534.5 721V747M535.5 723V753M536.5 730V751M537.5 724V759M538.5 727V750M539.5 725V751M540.5 732V753M541.5 722V784M542.5 716V757M543.5 724V746M544.5 727V747M545.5 728V753M546.5 731V749M547.5 731V756M548.5 731V759M549.5 734V753M550.5 726V752M551.5 727V755M552.5 719V745M553.5 723V747M554.5 713V744M555.5 707V752M556.5 723V752M557.5 720V778M558.5 716V747M559.5 717V742M560.5 719V771M561.5 715V746M562.5 722V746M563.5 734V753M564.5 732V758M565.5 731V752M566.5 726V750M567.5 727V748M568.5 724V759M569.5 733V752M570.5 730V753M571.5 726V759M572.5 722V748M573.5 717V744M574.5 717V758M575.5 709V750M576.5 728V749M577.5 730V750M578.5 728V755M579.5 727V751M580.5 732V749M581.5 734V755M582.5 724V756M583.5 725V776M584.5 724V748M585.5 719V746M586.5 718V759M587.5 726V778M588.5 726V747M589.5 724V754M590.5 722V756M591.5 722V747M592.5 724V745M593.5 725V751M594.5 718V748M595.5 721V746M596.5 726V760M597.5 725V748M598.5 719V749M599.5 712V748M600.5 717V748M601.5 722V748M602.5 721V762M603.5 729V773M604.5 719V767M605.5 730V749M606.5 731V753M607.5 725V749M608.5 727V756M609.5 719V745M610.5 723V757M611.5 719V771M612.5 717V747M613.5 726V751M614.5 723V754M615.5 722V758M616.5 726V749M617.5 731V757M618.5 729V755M619.5 722V745M620.5 725V751M621.5 721V768M622.5 727V748M623.5 727V749M624.5 712V742M625.5 716V744M626.5 712V746M627.5 718V745M628.5 721V753M629.5 719V751M630.5 720V753M631.5 723V750M632.5 727V754M633.5 736V751M634.5 739V751M635.5 730V748M636.5 737V749M637.5 735V755M638.5 736V776M639.5 724V752M640.5 729V748M641.5 730V752M642.5 725V753M643.5 733V753M644.5 737V754M645.5 733V753M646.5 730V764M647.5 726V751M648.5 726V757M649.5 730V749M650.5 727V754M651.5 727V750M652.5 724V749M653.5 731V750M654.5 726V749M655.5 724V751M656.5 724V755M657.5 730V751M658.5 727V745M659.5 723V749M660.5 722V750M661.5 737V757M662.5 727V759M663.5 722V755M664.5 717V750M665.5 717V745M666.5 725V754M667.5 721V750M668.5 732V756M669.5 731V753M670.5 726V747M671.5 728V750M672.5 733V748M673.5 732V752M674.5 726V748M675.5 728V757M676.5 727V751M677.5 723V744M678.5 727V748M679.5 731V750M680.5 725V754M681.5 722V748M682.5 725V755M683.5 718V748M684.5 722V760M685.5 724V761M686.5 726V754M687.5 727V754M688.5 729V753M689.5 724V748M690.5 721V747M691.5 725V749M692.5 728V750M693.5 726V748M694.5 720V754M695.5 722V749M696.5 725V748M697.5 726V754M698.5 730V749M699.5 726V745M700.5 719V750M701.5 716V752M702.5 721V751M703.5 722V745M704.5 728V746M705.5 732V750M706.5 728V758M707.5 728V779M708.5 723V748M709.5 725V751M710.5 724V753M711.5 718V767M712.5 707V755M713.5 718V753M714.5 713V749M715.5 717V748M716.5 721V759M717.5 726V745M718.5 720V750M719.5 718V743M720.5 725V762M721.5 726V755M722.5 720V763M723.5 723V752M724.5 720V757M725.5 725V750M726.5 719V753M727.5 721V775M728.5 720V744M729.5 720V756M730.5 728V756M731.5 732V757M732.5 725V754M733.5 732V749M734.5 732V755M735.5 731V761M736.5 731V757M737.5 726V754M738.5 723V749M739.5 720V775M740.5 730V770M741.5 727V747M742.5 733V758M743.5 733V754M744.5 738V763M745.5 730V752M746.5 737V751M747.5 734V749M748.5 728V758M749.5 732V754M750.5 726V749M751.5 732V778M752.5 727V758M753.5 726V748M754.5 732V767M755.5 722V763M756.5 730V752M757.5 734V757M758.5 726V755M759.5 730V750M760.5 733V748M761.5 736V752M762.5 729V749M763.5 717V746M764.5 724V748M765.5 722V752M766.5 720V772M767.5 734V750M768.5 731V753M769.5 728V749M770.5 724V754M771.5 728V757M772.5 732V749M773.5 731V756M774.5 730V751M775.5 724V749M776.5 730V755M777.5 722V753M778.5 725V747M779.5 722V751M780.5 736V749M781.5 726V778M782.5 735V758M783.5 731V756M784.5 728V756M785.5 724V748M786.5 732V750M787.5 728V748M788.5 726V751M789.5 710V750M790.5 726V759M791.5 721V753M792.5 721V755M793.5 728V755M794.5 725V758M795.5 723V758M796.5 726V749M797.5 731V768M798.5 724V747M799.5 720V744M800.5 727V750M801.5 728V751M802.5 727V753M803.5 725V748M804.5 722V753M805.5 719V750M806.5 720V759M807.5 714V748M808.5 716V753M809.5 722V766M810.5 725V749M811.5 730V748M812.5 724V746M813.5 724V749M814.5 721V756M815.5 732V750M816.5 725V756M817.5 719V746M818.5 723V746M819.5 720V744M820.5 720V745M821.5 717V749M822.5 720V745M823.5 721V746M824.5 719V750M825.5 723V765M826.5 735V750M827.5 735V765M828.5 729V762M829.5 723V747M830.5 727V761M831.5 727V757M832.5 720V752M833.5 730V757M834.5 739V761M835.5 735V753M836.5 737V754M837.5 731V753M838.5 726V758M839.5 726V766M840.5 729V751M841.5 725V754M842.5 728V752M843.5 730V748M844.5 726V751M845.5 721V751M846.5 730V775M847.5 736V752M848.5 733V749M849.5 739V753M850.5 736V753M851.5 732V759M852.5 738V755M853.5 728V758M854.5 719V745M855.5 728V754M856.5 718V746M857.5 724V746M858.5 722V754M859.5 720V754M860.5 730V757M861.5 727V747M862.5 726V752M863.5 720V774M864.5 713V756M865.5 720V759M866.5 721V744M867.5 718V761M868.5 720V754M869.5 720V749M870.5 722V757M871.5 723V762M872.5 717V746M873.5 714V744M874.5 720V756M875.5 720V759M876.5 716V743M877.5 722V753M878.5 724V759M879.5 714V765M880.5 730V750M881.5 732V748M882.5 725V745M883.5 726V769M884.5 722V746M885.5 721V750M886.5 717V754M887.5 719V745M888.5 722V755M889.5 731V761M890.5 728V752M891.5 738V753M892.5 730V751M893.5 727V754M894.5 730V749M895.5 721V746M896.5 727V766M897.5 720V749M898.5 714V760M899.5 719V752M900.5 730V758M901.5 724V750M902.5 730V751M903.5 729V755M904.5 735V754M905.5 734V754M906.5 733V763M907.5 723V754M908.5 707V758M909.5 714V775M910.5 718V743M911.5 721V744M912.5 722V743M913.5 714V743M914.5 717V750M915.5 722V748M916.5 727V750M917.5 721V772M918.5 725V749M919.5 724V746M920.5 726V747M921.5 727V750M922.5 712V747M923.5 721V745M924.5 724V751M925.5 723V749M926.5 727V769M927.5 725V752M928.5 720V790M929.5 724V765M930.5 728V755M931.5 736V752M932.5 727V748M933.5 737V756M934.5 732V760M935.5 731V757M936.5 731V752M937.5 724V754M938.5 716V747M939.5 722V776M940.5 721V756M941.5 717V742M942.5 723V770M943.5 721V746M944.5 717V752M945.5 718V751M946.5 711V742M947.5 717V744M948.5 716V757M949.5 719V742M950.5 716V744M951.5 718V760M952.5 724V746M953.5 719V745M954.5 728V759M955.5 733V758M956.5 736V752M957.5 741V751M958.5 740V752M959.5 741V760M960.5 739V778M961.5 736V754M962.5 724V751M963.5 732V750M964.5 721V772M965.5 730V749M966.5 728V750M967.5 727V755M968.5 724V772M969.5 718V750M970.5 721V749M971.5 724V754M972.5 725V753M973.5 725V749M974.5 720V745M975.5 718V744M976.5 711V743M977.5 723V746M978.5 718V750M979.5 726V747M980.5 721V760M981.5 730V747M982.5 726V763M983.5 725V747M984.5 725V749M985.5 713V758M986.5 724V758M987.5 722V746M988.5 728V768M989.5 722V769M990.5 723V758M991.5 726V752M992.5 724V753M993.5 728V750M994.5 725V745M995.5 718V756M996.5 727V750M997.5 722V746M998.5 712V747M999.5 733V758M1000.5 731V757M1001.5 721V758M1002.5 731V747M1003.5 728V750M1004.5 726V751M1005.5 733V751M1006.5 718V749M1007.5 734V755M1008.5 726V759M1009.5 725V752M1010.5 719V756M1011.5 723V759M1012.5 726V751M1013.5 732V757M1014.5 732V754M1015.5 729V769M1016.5 726V750M1017.5 732V759M1018.5 722V752M1019.5 721V756M1020.5 723V744M1021.5 723V769M1022.5 727V747M1023.5 727V750M1024.5 726V763M1025.5 727V755M1026.5 727V747M1027.5 722V755M1028.5 725V758M1029.5 733V751M1030.5 725V750M1031.5 715V763M1032.5 719V768M1033.5 718V747M1034.5 716V780M1035.5 719V747M1036.5 721V759M1037.5 713V751M1038.5 714V753M1039.5 713V743M1040.5 707V746M1041.5 704V745M1042.5 716V746M1043.5 711V742M1044.5 713V770M1045.5 715V765M1046.5 714V742M1047.5 720V744M1048.5 719V751M1049.5 716V750M1050.5 716V752M1051.5 712V753M1052.5 721V775M1053.5 714V748M1054.5 722V750M1055.5 717V747M1056.5 711V750M1057.5 725V750M1058.5 723V762M1059.5 723V745M1060.5 731V757M1061.5 733V753M1062.5 732V756M1063.5 728V780M1064.5 724V746M1065.5 722V754M1066.5 723V746M1067.5 723V764M1068.5 716V756M1069.5 715V748M1070.5 726V747M1071.5 720V758M1072.5 720V747M1073.5 727V753M1074.5 720V746M1075.5 726V746M1076.5 718V747M1077.5 719V747M1078.5 722V754M1079.5 723V746M1080.5 729V747M1081.5 724V749M1082.5 725V751M1083.5 734V763M1084.5 732V756M1085.5 735V761M1086.5 720V758M1087.5 722V745M1088.5 724V747M1089.5 730V748M1090.5 728V747M1091.5 729V750M1092.5 727V759M1093.5 728V759M1094.5 727V760M1095.5 733V760M1096.5 732V774M1097.5 726V757M1098.5 725V760M1099.5 718V752M1100.5 718V745M1101.5 724V748M1102.5 719V750M1103.5 715V746M1104.5 714V749M1105.5 717V743M1106.5 721V752M1107.5 713V742M1108.5 719V746M1109.5 720V752M1110.5 720V755M1111.5 719V754M1112.5 725V747M1113.5 721V755M1114.5 718V760M1115.5 726V745M1116.5 722V744M1117.5 721V747M1118.5 719V752M1119.5 725V751M1120.5 727V753M1121.5 725V775M1122.5 726V746M1123.5 715V742M1124.5 724V750M1125.5 726V750M1126.5 722V748M1127.5 725V749M1128.5 721V753M1129.5 723V757M1130.5 719V768M1131.5 722V756M1132.5 726V749M1133.5 725V760M1134.5 724V752M1135.5 718V751M1136.5 727V765M1137.5 720V746M1138.5 717V765M1139.5 724V752M1140.5 723V750M1141.5 727V752M1142.5 720V745M1143.5 725V754M1144.5 725V767M1145.5 720V745M1146.5 725V754M1147.5 716V754M1148.5 725V758M1149.5 724V752M1150.5 729V754M1151.5 733V753M1152.5 727V755M1153.5 729V754M1154.5 728V758M1155.5 721V756M1156.5 721V753M1157.5 725V767M1158.5 735V766M1159.5 733V750M1160.5 736V756M1161.5 729V748M1162.5 739V758M1163.5 736V749M1164.5 723V751M1165.5 729V747M1166.5 732V762M1167.5 722V747M1168.5 722V752M1169.5 729V748M1170.5 731V748M1171.5 729V753M1172.5 726V752M1173.5 723V746M1174.5 721V746M1175.5 727V754M1176.5 719V753M1177.5 724V747M1178.5 717V747M1179.5 722V765M1180.5 720V745M1181.5 710V754M1182.5 721V753M1183.5 727V755M1184.5 728V747M1185.5 717V746M1186.5 726V778M1187.5 721V745M1188.5 723V755M1189.5 725V758M1190.5 729V773M1191.5 726V746M1192.5 718V748M1193.5 713V745M1194.5 718V746M1195.5 723V750M1196.5 725V746M1197.5 728V755M1198.5 728V755M1199.5 733V761M1200.5 733V756M1201.5 729V752M1202.5 738V751M1203.5 735V751M1204.5 730V767M1205.5 728V749M1206.5 727V762M1207.5 726V747M1208.5 726V751M1209.5 729V748M1210.5 726V765M1211.5 716V745M1212.5 729V751M1213.5 730V747M1214.5 732V747M1215.5 725V753M1216.5 725V754M1217.5 716V779M1218.5 721V756M1219.5 728V750M1220.5 734V749M1221.5 736V758M1222.5 729V751M1223.5 726V769M1224.5 729V751M1225.5 732V760M1226.5 729V754M1227.5 717V751M1228.5 716V755M1229.5 717V756M1230.5 719V771M1231.5 728V753M1232.5 728V749M1233.5 715V752M1234.5 723V768M1235.5 725V750M1236.5 717V758M1237.5 714V742M1238.5 722V752M1239.5 718V754M1240.5 711V742M1241.5 710V744M1242.5 712V766M1243.5 713V741M1244.5 725V759M1245.5 725V754M1246.5 724V749M1247.5 724V749M1248.5 723V758M1249.5 722V751M1250.5 725V751M1251.5 730V761M1252.5 728V749M1253.5 728V751M1254.5 726V757M1255.5 719V744M1256.5 714V748M1257.5 714V747M1258.5 715V748M1259.5 721V760M1260.5 716V747M1261.5 718V743M1262.5 707V741M1263.5 714V740M1264.5 721V752M1265.5 722V749M1266.5 717V769M1267.5 721V770M1268.5 716V765M1269.5 721V744M1270.5 722V748M1271.5 725V749M1272.5 720V752M1273.5 716V754M1274.5 722V745M1275.5 721V763M1276.5 721V752M1277.5 726V751M1278.5 721V747M1279.5 732V753M1280.5 726V756M1281.5 723V751M1282.5 731V751M1283.5 726V749M1284.5 731V750M1285.5 739V762M1286.5 734V752M1287.5 735V749M1288.5 726V749M1289.5 728V754M1290.5 730V749M1291.5 735V753M1292.5 722V747M1293.5 722V755M1294.5 720V760M1295.5 726V747M1296.5 724V765M1297.5 722V779M1298.5 719V759M1299.5 726V751M1300.5 728V750M1301.5 732V751M1302.5 723V748M1303.5 714V770M1304.5 725V745M1305.5 718V754M1306.5 725V749M1307.5 722V748M1308.5 718V755M1309.5 720V751M1310.5 725V745M1311.5 722V755M1312.5 722V768M1313.5 727V751M1314.5 728V756M1315.5 725V768M1316.5 731V747M1317.5 731V751M1318.5 733V763M1319.5 737V762M1320.5 731V760M1321.5 734V766M1322.5 736V751M1323.5 730V753M1324.5 728V752M1325.5 720V748M1326.5 728V763M1327.5 729V749M1328.5 731V750M1329.5 731V748M1330.5 724V759M1331.5 723V754M1332.5 713V762M1333.5 717V768M1334.5 724V748M1335.5 729V755M1336.5 729V746M1337.5 724V747M1338.5 728V758M1339.5 724V748M1340.5 734V751M1341.5 729V756M1342.5 728V755M1343.5 722V747M1344.5 716V751M1345.5 721V745M1346.5 724V745M1347.5 718V768M1348.5 720V742M1349.5 727V746M1350.5 720V749M1351.5 719V756M1352.5 736V772M1353.5 729V750M1354.5 729V757M1355.5 724V749M1356.5 731V752M1357.5 732V762M1358.5 726V755M1359.5 727V748M1360.5 727V765M1361.5 725V750M1362.5 730V753M1363.5 725V755M1364.5 732V752M1365.5 726V746M1366.5 725V748M1367.5 733V755M1368.5 721V753M1369.5 716V749M1370.5 722V743M1371.5 718V744M1372.5 723V761M1373.5 722V751M1374.5 727V756M1375.5 719V745M1376.5 712V744M1377.5 723V766M1378.5 726V748M1379.5 720V745M1380.5 732V773M1381.5 729V772M1382.5 731V755M1383.5 730V754M1384.5 726V783M1385.5 730V753M1386.5 724V752M1387.5 727V779M1388.5 729V751M1389.5 728V750M1390.5 736V751M1391.5 717V767M1392.5 739V751M1393.5 730V748M1394.5 729V752M1395.5 728V745M1396.5 727V770M1397.5 733V750M1398.5 743V766M1399.5 733V752M1400.5 735V753M1401.5 732V767M1402.5 723V756M1403.5 724V754M1404.5 726V775M1405.5 727V755M1406.5 727V766M1407.5 721V750M1408.5 729V766M1409.5 723V747M1410.5 728V749M1411.5 734V770M1412.5 729V758M1413.5 734V755M1414.5 729V746M1415.5 728V762M1416.5 718V749M1417.5 720V774M1418.5 731V753M1419.5 722V747M1420.5 724V759M1421.5 732V781M1422.5 727V747M1423.5 728V760M1424.5 723V748M1425.5 725V747M1426.5 726V749M1427.5 724V753M1428.5 724V776M1429.5 726V748M1430.5 727V746M1431.5 725V749M1432.5 720V770M1433.5 725V747M1434.5 728V745M1435.5 717V747M1436.5 718V749M1437.5 715V743M1438.5 719V766M1439.5 731V748M1440.5 724V749M1441.5 726V775M1442.5 721V743M1443.5 723V777M1444.5 715V750M1445.5 711V749M1446.5 724V751M1447.5 719V758M1448.5 728V754M1449.5 724V761M1450.5 729V748M1451.5 729V748M1452.5 727V752M1453.5 716V745M1454.5 718V750M1455.5 726V747M1456.5 723V750M1457.5 726V753M1458.5 720V748M1459.5 726V747M1460.5 723V757M1461.5 732V748M1462.5 729V747M1463.5 732V748M1464.5 721V751M1465.5 721V750M1466.5 722V778M1467.5 729V758M1468.5 723V749M1469.5 724V748M1470.5 731V756M1471.5 725V760M1472.5 723V758M1473.5 719V744M1474.5 716V747M1475.5 720V745M1476.5 721V759M1477.5 728V758M1478.5 721V759M1479.5 729V747M1480.5 723V757M1481.5 722V752M1482.5 729V758M1483.5 726V746M1484.5 726V749M1485.5 724V745M1486.5 719V749M1487.5 727V775M1488.5 726V758M1489.5 724V770M1490.5 732V749M1491.5 729V753M1492.5 721V752M1493.5 714V747M1494.5 717V751M1495.5 719V753M1496.5 710V751M1497.5 731V748M1498.5 726V746M1499.5 728V746M1500.5 732V754M1501.5 730V751M1502.5 726V750M1503.5 720V749M1504.5 715V756M1505.5 723V761M1506.5 712V750M1507.5 725V745M1508.5 731V759M1509.5 736V760M1510.5 729V774M1511.5 731V750M1512.5 733V755M1513.5 734V751M1514.5 728V757M1515.5 724V747M1516.5 720V760M1517.5 726V755M1518.5 723V749M1519.5 726V750M1520.5 721V743M1521.5 708V742M1522.5 716V766M1523.5 711V746M1524.5 716V765M1525.5 721V745M1526.5 715V745M1527.5 718V744M1528.5 724V747M1529.5 733V753M1530.5 725V757M1531.5 730V754M1532.5 738V766M1533.5 735V754M1534.5 732V751M1535.5 722V754M1536.5 728V759M1537.5 726V762M1538.5 725V750M1539.5 734V762M1540.5 725V761M1541.5 724V752M1542.5 723V749M1543.5 720V757M1544.5 717V757M1545.5 724V746M1546.5 729V749M1547.5 727V749M1548.5 731V750M1549.5 729V749M1550.5 735V752M1551.5 738V750M1552.5 730V759M1553.5 736V750M1554.5 727V772M1555.5 727V758M1556.5 724V754M1557.5 729V749M1558.5 721V752M1559.5 721V752M1560.5 726V746M1561.5 724V755M1562.5 727V758M1563.5 724V751M1564.5 723V761M1565.5 720V750M1566.5 724V752M1567.5 718V749M1568.5 724V749M1569.5 726V760M1570.5 727V772M1571.5 723V758M1572.5 721V771M1573.5 715V751M1574.5 720V746M1575.5 720V750M1576.5 716V743M1577.5 720V760M1578.5 720V746M1579.5 719V753M1580.5 717V747M1581.5 718V760M1582.5 715V759M1583.5 715V748M1584.5 720V742M1585.5 723V758M1586.5 727V747M1587.5 728V755M1588.5 720V744M1589.5 723V757M1590.5 716V763M1591.5 722V749M1592.5 720V745M1593.5 720V747M1594.5 723V748M1595.5 728V748M1596.5 727V755M1597.5 727V747M1598.5 717V741M1599.5 722V753M1600.5 718V760M1601.5 718V744M1602.5 718V755M1603.5 728V753M1604.5 722V745M1605.5 720V744M1606.5 718V749M1607.5 723V746M1608.5 727V753M1609.5 731V753M1610.5 719V750M1611.5 726V763M1612.5 721V752M1613.5 728V747M1614.5 733V753M1615.5 738V768M1616.5 733V751M1617.5 734V755M1618.5 727V765M1619.5 726V778M1620.5 733V748M1621.5 729V758M1622.5 727V778M1623.5 729V769M1624.5 724V748M1625.5 719V770M1626.5 724V744M1627.5 719V754M1628.5 718V744M1629.5 714V744M1630.5 722V748M1631.5 722V748M1632.5 728V756M1633.5 728V750M1634.5 727V770M1635.5 723V747M1636.5 722V749M1637.5 724V751M1638.5 733V752M1639.5 727V755M1640.5 730V753M1641.5 724V756M1642.5 718V749M1643.5 714V744M1644.5 720V751M1645.5 714V758M1646.5 711V745M1647.5 717V758M1648.5 712V749M1649.5 719V748M1650.5 713V747M1651.5 715V744M1652.5 713V745M1653.5 721V768M1654.5 726V751M1655.5 728V763M1656.5 729V756M1657.5 717V746M1658.5 715V744M1659.5 713V742M1660.5 723V758M1661.5 721V763M1662.5 723V759M1663.5 722V753M1664.5 733V748M1665.5 730V750M1666.5 728V748M1667.5 731V749M1668.5 730V753M1669.5 733V762M1670.5 727V751M1671.5 731V748M1672.5 734V755M1673.5 728V748M1674.5 732V755M1675.5 719V770M1676.5 726V747M1677.5 728V746M1678.5 727V745M1679.5 728V770M1680.5 718V752M1681.5 727V751M1682.5 729V762M1683.5 723V770M1684.5 726V751M1685.5 729V751M1686.5 731V747M1687.5 726V752M1688.5 729V754M1689.5 733V748M1690.5 731V748M1691.5 723V754M1692.5 728V772M1693.5 719V752M1694.5 724V781M1695.5 720V756M1696.5 725V755M1697.5 728V748M1698.5 733V759M1699.5 732V750M1700.5 717V750M1701.5 718V747M1702.5 718V745M1703.5 720V746M1704.5 722V747M1705.5 724V761M1706.5 722V749M1707.5 731V750M1708.5 731V748M1709.5 736V757M1710.5 736V752M1711.5 731V757M1712.5 734V758M1713.5 732V759M1714.5 732V775M1715.5 736V765M1716.5 736V758M1717.5 734V752M1718.5 735V757M1719.5 727V754M1720.5 724V752M1721.5 722V774M1722.5 723V747M1723.5 728V765M1724.5 723V753M1725.5 723V752M1726.5 720V751M1727.5 715V754M1728.5 719V745M1729.5 721V761M1730.5 723V751M1731.5 721V776M1732.5 724V746M1733.5 726V750M1734.5 711V762M1735.5 722V756M1736.5 725V747M1737.5 728V748M1738.5 729V750M1739.5 729V746M1740.5 731V758M1741.5 740V752M1742.5 728V752M1743.5 728V764M1744.5 725V754M1745.5 723V748M1746.5 736V755M1747.5 730V754M1748.5 734V751M1749.5 727V749M1750.5 729V761M1751.5 730V754M1752.5 724V750M1753.5 726V750M1754.5 729V767M1755.5 724V748M1756.5 732V763M1757.5 726V748M1758.5 725V751M1759.5 725V752M1760.5 728V747M1761.5 715V750M1762.5 727V766M1763.5 723V754M1764.5 723V760M1765.5 719V745M1766.5 725V755M1767.5 722V752M1768.5 725V744M1769.5 727V772M1770.5 722V751M1771.5 722V754M1772.5 721V746M1773.5 730V749M1774.5 725V772M1775.5 724V753M1776.5 724V754M1777.5 734V764M1778.5 728V763M1779.5 730V749M1780.5 736V750M1781.5 735V755M1782.5 730V754M1783.5 730V750M1784.5 727V750M1785.5 724V745M1786.5 723V744M1787.5 721V751M1788.5 723V790M1789.5 718V750M1790.5 716V749M1791.5 723V746M1792.5 715V746M1793.5 730V761M1794.5 732V756M1795.5 722V753M1796.5 724V752M1797.5 732V751M1798.5 724V762M1799.5 731V749M1800.5 739V780M1801.5 737V757M1802.5 727V749M1803.5 725V752M1804.5 719V772M1805.5 723V754M1806.5 715V772M1807.5 722V752M1808.5 714V758M1809.5 725V755M1810.5 723V754M1811.5 726V751M1812.5 722V766M1813.5 726V758M1814.5 733V751M1815.5 728V747M1816.5 729V750M1817.5 732V752M1818.5 730V761M1819.5 733V760M1820.5 722V757M1821.5 723V755M1822.5 728V747M1823.5 724V756M1824.5 727V749M1825.5 718V756M1826.5 726V783M1827.5 729V758M1828.5 736V749M1829.5 735V756M1830.5 728V749M1831.5 728V757M1832.5 719V757M1833.5 719V765M1834.5 732V762M1835.5 722V748M1836.5 729V775M1837.5 730V753M1838.5 727V760M1839.5 724V753M1840.5 724V749M1841.5 729V753M1842.5 732V763M1843.5 726V766M1844.5 722V748M1845.5 721V761M1846.5 725V756M1847.5 725V761M1848.5 721V752M1849.5 715V746M1850.5 721V753M1851.5 722V752M1852.5 724V763M1853.5 727V761M1854.5 720V747M1855.5 730V761M1856.5 727V748M1857.5 726V769M1858.5 733V756M1859.5 737V760M1860.5 739V755M1861.5 733V757M1862.5 724V759M1863.5 730V763M1864.5 727V780M1865.5 728V768M1866.5 727V759M1867.5 732V767M1868.5 725V759M1869.5 736V756M1870.5 726V783M1871.5 721V748M1872.5 728V753M1873.5 730V749M1874.5 731V749M1875.5 729V759M1876.5 733V750M1877.5 732V762M1878.5 729V750M1879.5 729V756M1880.5 738V749M1881.5 726V772M1882.5 730V751M1883.5 733V748M1884.5 726V753M1885.5 735V753M1886.5 729V765M1887.5 727V756M1888.5 726V756M1889.5 728V781M1890.5 732V756M1891.5 725V747M1892.5 726V757M1893.5 728V753M1894.5 724V746M1895.5 726V746M1896.5 714V770M1897.5 724V751M1898.5 722V745M1899.5 723V744M1900.5 719V753M1901.5 724V749M1902.5 724V748M1903.5 727V749" stroke="#00f000" stroke-width="1" fill="none"/><path d="M145.5 747V731M148.5 741V723M159.5 754V740M169.5 748V726M184.5 745V731M194.5 743V730M201.5 743V720M210.5 747V729M217.5 748V724M244.5 738V718M255.5 744V733M272.5 748V734M299.5 744V736M339.5 742V723M351.5 744V727M385.5 743V729M406.5 744V728M410.5 740V725M413.5 746V722M416.5 747V728M418.5 744V726M430.5 745V723M433.5 747V723M434.5 743V734M450.5 741V732M459.5 745V728M466.5 744V732M486.5 745V723M530.5 749V735M549.5 747V725M560.5 742V727M565.5 744V736M579.5 743V729M582.5 747V736M596.5 745V729M625.5 748V732M627.5 740V722M638.5 746V722M640.5 749V728M649.5 747V721M662.5 747V739M669.5 749V723M679.5 743V734M684.5 742V719M693.5 743V733M709.5 741V727M722.5 745V719M747.5 742V724M767.5 746V737M779.5 746V730M785.5 747V726M816.5 747V728M820.5 742V733M823.5 743V726M824.5 745V732M826.5 745V721M831.5 748V727M834.5 742V720M845.5 742V732M855.5 745V722M867.5 745V723M888.5 750V726M906.5 742V728M912.5 742V728M930.5 745V727M934.5 741V728M941.5 747V736M946.5 745V728M957.5 748V728M959.5 736V718M963.5 743V720M965.5 746V737M975.5 741V730M978.5 748V731M979.5 742V730M983.5 745V724M985.5 740V718M1017.5 742V716M1019.5 742V726M1020.5 742V721M1021.5 739V721M1027.5 745V731M1046.5 739V728M1049.5 741V729M1052.5 747V724M1053.5 746V731M1063.5 741V725M1075.5 742V721M1076.5 742V722M1082.5 748V729M1111.5 744V718M1144.5 747V738M1145.5 743V721M1154.5 743V726M1168.5 742V726M1178.5 743V717M1190.5 744V720M1192.5 742V718M1197.5 744V726M1212.5 741V716M1235.5 745V732M1251.5 742V716M1267.5 743V718M1285.5 742V717M1288.5 744V736M1296.5 749V723M1314.5 741V727M1325.5 740V721M1330.5 746V723M1335.5 748V734M1340.5 748V735M1347.5 749V736M1350.5 743V726M1362.5 744V730M1371.5 752V737M1375.5 742V719M1396.5 748V735M1401.5 745V728M1406.5 746V734M1420.5 746V723M1438.5 751V729M1449.5 741V723M1452.5 742V729M1455.5 746V722M1457.5 743V720M1462.5 742V723M1463.5 745V724M1494.5 743V722M1498.5 743V729M1520.5 740V724M1531.5 743V728M1534.5 738V720M1557.5 741V721M1559.5 745V730M1563.5 748V724M1566.5 747V738M1579.5 744V730M1583.5 744V725M1584.5 748V736M1590.5 745V720M1598.5 745V727M1603.5 739V730M1605.5 745V730M1616.5 748V738M1621.5 744V718M1622.5 742V728M1623.5 742V726M1672.5 745V725M1676.5 750V730M1677.5 744V736M1680.5 742V718M1700.5 747V728M1701.5 745V734M1702.5 745V736M1707.5 740V714M1719.5 745V737M1725.5 746V723M1738.5 742V732M1740.5 746V732M1755.5 751V728M1760.5 745V721M1765.5 743V732M1796.5 743V733M1803.5 739V714M1817.5 746V733M1828.5 746V723M1838.5 747V733M1855.5 741V717M1867.5 742V730M1886.5 741V720M1895.5 745V719M1897.5 743V724" stroke="#b02818" stroke-width="1" fill="none"/><path d="M142.5 735V769M143.5 737V792M147.5 731V792M148.5 731V784M154.5 727V788M158.5 721V779M163.5 732V779M166.5 723V761M167.5 734V783M186.5 734V786M187.5 725V761M188.5 728V765M203.5 732V772M208.5 723V771M209.5 726V790M218.5 735V766M224.5 732V764M225.5 729V765M228.5 731V779M237.5 729V779M244.5 741V780M245.5 724V762M252.5 737V795M255.5 736V800M260.5 717V779M266.5 727V773M268.5 723V772M273.5 732V777M293.5 737V785M298.5 721V782M302.5 735V779M309.5 721V790M311.5 731V784M318.5 740V785M321.5 731V803M328.5 732V801M329.5 715V775M337.5 728V785M340.5 734V797M367.5 742V771M398.5 721V762M400.5 719V756M404.5 719V772M407.5 722V783M411.5 725V782M412.5 739V781M421.5 738V779M428.5 743V771M440.5 735V777M442.5 740V800M452.5 735V769M459.5 738V793M462.5 730V779M463.5 733V774M468.5 708V772M469.5 722V758M472.5 729V777M490.5 714V780M492.5 721V773M494.5 734V783M503.5 733V772M504.5 735V768M509.5 733V774M511.5 731V771M514.5 717V776M516.5 714V769M520.5 712V776M527.5 713V763M537.5 732V777M543.5 730V782M551.5 728V785M552.5 721V763M554.5 713V780M555.5 709V768M561.5 717V769M566.5 728V784M575.5 718V777M590.5 732V772M593.5 732V786M600.5 725V765M606.5 741V774M609.5 725V762M610.5 723V766M627.5 722V764M629.5 721V759M630.5 728V764M645.5 737V789M648.5 726V767M649.5 738V761M655.5 733V763M659.5 730V757M666.5 725V787M677.5 732V776M685.5 726V789M694.5 728V775M709.5 731V780M710.5 730V768M712.5 713V770M724.5 724V789M725.5 729V765M739.5 730V791M740.5 731V790M746.5 745V785M748.5 733V785M750.5 729V780M754.5 736V794M756.5 734V771M769.5 734V784M773.5 731V784M781.5 734V809M792.5 732V789M800.5 735V781M803.5 730V779M807.5 720V774M809.5 731V780M819.5 727V764M823.5 723V773M841.5 730V784M845.5 723V776M848.5 743V785M849.5 745V784M851.5 732V794M857.5 730V769M863.5 729V789M867.5 728V797M875.5 720V774M876.5 719V758M888.5 729V779M889.5 737V773M900.5 732V774M903.5 732V773M905.5 744V784M914.5 722V786M917.5 727V807M929.5 733V789M938.5 719V766M939.5 732V820M943.5 728V790M950.5 717V774M951.5 718V782M952.5 734V781M963.5 741V781M964.5 726V795M967.5 737V779M969.5 724V761M984.5 725V762M985.5 721V773M987.5 723V776M989.5 730V787M1005.5 734V765M1006.5 722V771M1012.5 733V773M1021.5 724V801M1024.5 732V773M1027.5 726V787M1036.5 729V786M1042.5 721V792M1047.5 729V778M1048.5 725V773M1050.5 726V768M1052.5 724V797M1058.5 727V780M1059.5 728V774M1072.5 729V782M1078.5 727V771M1080.5 739V785M1087.5 725V763M1089.5 734V761M1091.5 731V771M1113.5 726V790M1115.5 726V766M1117.5 730V756M1129.5 723V774M1141.5 731V784M1151.5 735V791M1155.5 729V782M1166.5 742V787M1170.5 737V762M1175.5 735V766M1179.5 725V787M1181.5 711V775M1183.5 738V774M1192.5 722V769M1209.5 734V781M1215.5 734V767M1216.5 729V785M1228.5 723V770M1230.5 726V788M1231.5 738V782M1233.5 721V777M1237.5 721V757M1246.5 727V758M1252.5 737V772M1255.5 722V775M1257.5 714V784M1258.5 717V771M1280.5 736V777M1285.5 745V787M1295.5 733V769M1300.5 732V779M1305.5 718V770M1310.5 727V764M1311.5 725V777M1314.5 735V775M1323.5 730V782M1325.5 727V780M1335.5 734V792M1336.5 738V768M1340.5 743V787M1343.5 725V775M1344.5 723V786M1346.5 724V767M1348.5 723V780M1350.5 721V779M1353.5 731V776M1358.5 735V784M1368.5 728V788M1375.5 720V780M1376.5 722V787M1377.5 727V805M1378.5 730V788M1379.5 725V769M1383.5 736V781M1386.5 729V793M1399.5 739V787M1404.5 731V798M1410.5 735V768M1414.5 730V771M1417.5 727V807M1430.5 736V764M1431.5 732V761M1434.5 734V778M1438.5 721V778M1443.5 725V795M1453.5 721V757M1459.5 730V771M1460.5 728V785M1461.5 741V786M1462.5 738V767M1472.5 729V775M1475.5 729V765M1477.5 729V772M1479.5 732V765M1483.5 732V779M1488.5 736V776M1495.5 726V780M1499.5 737V780M1501.5 736V788M1507.5 730V758M1508.5 741V782M1511.5 735V779M1512.5 734V767M1515.5 725V760M1520.5 730V763M1525.5 726V768M1531.5 734V774M1539.5 739V786M1553.5 738V781M1566.5 728V773M1567.5 721V780M1574.5 722V783M1598.5 724V754M1605.5 729V771M1613.5 733V764M1628.5 723V761M1632.5 731V783M1647.5 724V784M1654.5 728V778M1663.5 727V767M1672.5 737V769M1688.5 731V801M1705.5 735V782M1711.5 738V789M1719.5 731V791M1724.5 727V775M1725.5 729V789M1738.5 732V766M1739.5 730V767M1743.5 730V773M1748.5 736V782M1749.5 731V759M1750.5 735V782M1752.5 728V777M1758.5 730V786M1762.5 737V796M1770.5 726V782M1774.5 727V798M1775.5 731V765M1777.5 738V792M1778.5 733V796M1783.5 732V781M1789.5 722V779M1797.5 741V763M1800.5 746V791M1805.5 725V777M1815.5 729V755M1821.5 732V782M1840.5 732V783M1841.5 737V781M1858.5 743V785M1877.5 743V774M1886.5 737V795M1891.5 729V761M1895.5 733V759M1902.5 731V779M1903.5 737V782" stroke="#b0b020" stroke-width="1" fill="none"/><path d="M139.5 723V728M144.5 722V726M145.5 726V731M147.5 731V736M148.5 721V725M149.5 711V719M153.5 724V732M155.5 721V728M159.5 723V728M160.5 725V730M162.5 730V735M164.5 722V725M167.5 720V726M174.5 718V721M177.5 721V725M178.5 715V723M179.5 724V727M181.5 715V720M182.5 724V728M186.5 714V717M187.5 713V717M189.5 718V721M193.5 722V725M199.5 711V714M200.5 709V715M201.5 721V728M204.5 708V714M206.5 711V717M208.5 720V723M209.5 719V724M213.5 719V724M216.5 722V725M221.5 720V726M222.5 716V720M224.5 720V725M225.5 722V726M228.5 719V727M232.5 722V727M234.5 736V743M236.5 728V731M237.5 726V734M238.5 718V723M239.5 730V738M240.5 735V742M242.5 741V747M244.5 725V729M252.5 728V730M253.5 740V743M256.5 723V726M257.5 710V717M258.5 716V719M259.5 710V714M262.5 712V719M266.5 720V727M267.5 723V731M273.5 716V721M276.5 717V724M280.5 715V721M282.5 729V734M283.5 733V740M286.5 728V736M287.5 725V728M288.5 718V723M289.5 715V719M290.5 719V722M293.5 728V734M294.5 725V728M296.5 710V717M299.5 717V723M300.5 723V726M302.5 718V721M308.5 724V730M309.5 709V716M313.5 723V730M314.5 734V739M315.5 730V736M316.5 722V730M317.5 729V733M319.5 732V737M322.5 715V719M324.5 726V730M325.5 718V723M326.5 719V722M327.5 708V713M332.5 715V719M334.5 714V718M337.5 725V731M338.5 720V724M339.5 726V731M342.5 709V713M343.5 728V733M344.5 716V721M345.5 724V728M346.5 722V729M347.5 713V717M348.5 721V728M351.5 712V719M353.5 717V722M355.5 719V726M358.5 716V722M362.5 730V735M365.5 719V724M369.5 730V733M370.5 729V737M372.5 723V726M373.5 709V715M374.5 721V726M377.5 716V719M380.5 729V736M381.5 724V730M383.5 723V726M384.5 718V724M386.5 729V734M389.5 717V720M391.5 712V719M392.5 708V712M402.5 715V717M404.5 713V720M408.5 726V732M409.5 730V735M411.5 706V709M412.5 720V723M416.5 730V733M417.5 715V722M420.5 724V731M421.5 722V729M422.5 723V729M423.5 723V730M426.5 722V728M427.5 721V724M428.5 733V740M429.5 721V726M431.5 720V724M433.5 698V705M434.5 720V723M437.5 715V722M438.5 727V732M441.5 729V732M443.5 733V737M444.5 724V732M445.5 711V718M448.5 719V724M451.5 714V719M453.5 722V725M455.5 733V736M459.5 728V735M463.5 718V726M465.5 712V715M466.5 713V721M472.5 720V724M479.5 724V731M480.5 723V728M481.5 727V730M482.5 728V734M484.5 733V737M485.5 729V734M486.5 721V725M488.5 723V728M489.5 718V724M493.5 718V726M495.5 725V730M496.5 717V723M497.5 721V726M498.5 718V724M500.5 719V723M504.5 724V730M507.5 717V723M508.5 715V720M512.5 723V726M519.5 705V709M520.5 700V705M521.5 709V716M528.5 704V710M532.5 719V725M534.5 714V721M535.5 718V722M538.5 719V725M539.5 722V730M540.5 729V734M542.5 713V719M546.5 722V728M547.5 729V733M553.5 723V727M554.5 703V709M556.5 720V728M557.5 712V719M558.5 712V715M562.5 724V729M565.5 728V733M566.5 722V726M568.5 719V724M569.5 723V731M571.5 724V731M572.5 723V730M573.5 716V720M574.5 720V723M576.5 723V727M578.5 727V734M580.5 723V727M581.5 725V730M582.5 723V731M583.5 726V732M588.5 723V731M589.5 717V723M592.5 719V724M593.5 718V724M595.5 711V716M596.5 728V735M598.5 711V718M600.5 715V723M604.5 712V719M605.5 719V724M614.5 722V728M615.5 721V727M617.5 724V727M619.5 724V730M621.5 715V720M623.5 727V734M626.5 709V714M627.5 720V723M628.5 715V723M630.5 719V726M632.5 727V732M633.5 727V734M637.5 736V744M639.5 717V724M640.5 731V736M643.5 734V741M644.5 728V735M645.5 725V732M654.5 718V726M657.5 722V726M660.5 719V722M662.5 719V725M664.5 719V722M665.5 708V713M666.5 726V730M667.5 716V721M670.5 719V724M671.5 720V726M678.5 717V723M684.5 723V726M685.5 725V731M688.5 718V724M690.5 715V720M692.5 723V726M697.5 721V725M704.5 718V725M706.5 729V736M707.5 725V731M709.5 720V727M712.5 703V707M719.5 720V728M725.5 715V723M727.5 714V721M728.5 713V721M729.5 723V728M735.5 721V726M736.5 723V730M739.5 719V722M740.5 721V727M741.5 725V731M742.5 729V733M744.5 733V736M746.5 729V734M748.5 730V737M749.5 732V735M750.5 728V736M752.5 730V736M753.5 716V720M757.5 729V734M764.5 719V725M770.5 717V723M771.5 728V734M773.5 727V731M775.5 721V728M781.5 725V729M783.5 724V727M785.5 717V723M789.5 707V710M802.5 726V733M803.5 725V731M807.5 704V707M808.5 707V711M813.5 727V729M819.5 719V727M824.5 720V726M825.5 719V722M836.5 729V735M838.5 728V732M839.5 726V732M842.5 719V723M844.5 720V727M845.5 715V718M846.5 721V724M853.5 724V732M855.5 725V732M857.5 722V727M859.5 716V724M863.5 717V721M866.5 713V717M869.5 719V727M871.5 715V720M872.5 714V720M873.5 711V717M875.5 715V719M876.5 709V717M878.5 726V734M881.5 726V732M882.5 718V721M884.5 717V721M887.5 715V723M891.5 735V739M896.5 727V734M897.5 716V724M899.5 714V720M901.5 715V721M903.5 723V726M905.5 735V739M908.5 707V713M909.5 715V718M914.5 713V716M915.5 722V729M916.5 720V724M917.5 715V720M920.5 715V722M922.5 714V720M924.5 717V722M926.5 717V721M927.5 719V724M928.5 713V720M930.5 718V725M932.5 718V723M937.5 722V727M941.5 710V714M942.5 723V727M944.5 717V723M945.5 714V720M948.5 711V716M949.5 709V713M951.5 711V716M953.5 710V716M956.5 734V740M957.5 734V738M965.5 731V737M966.5 722V726M968.5 719V727M970.5 717V720M973.5 723V730M974.5 719V722M975.5 718V724M979.5 722V726M980.5 711V718M983.5 718V723M985.5 711V715M987.5 718V725M988.5 726V733M989.5 722V727M992.5 718V723M994.5 726V731M998.5 704V712M999.5 727V734M1004.5 728V735M1006.5 709V712M1010.5 721V724M1011.5 719V723M1013.5 724V730M1014.5 723V726M1015.5 719V724M1018.5 712V719M1020.5 722V727M1021.5 722V726M1025.5 729V734M1027.5 719V722M1028.5 723V729M1030.5 719V726M1035.5 713V718M1040.5 708V715M1046.5 712V715M1047.5 715V720M1051.5 714V719M1056.5 712V720M1057.5 723V730M1058.5 724V731M1060.5 724V730M1062.5 730V735M1063.5 725V731M1066.5 714V718M1068.5 714V722M1069.5 710V715M1070.5 718V723M1072.5 720V727M1080.5 726V730M1082.5 723V729M1083.5 733V738M1084.5 727V734M1085.5 736V740M1087.5 715V721M1092.5 722V727M1093.5 723V730M1094.5 722V726M1095.5 727V734M1099.5 718V726M1104.5 713V720M1106.5 720V726M1109.5 715V718M1110.5 714V717M1111.5 717V724M1112.5 717V722M1113.5 716V722M1114.5 709V717M1117.5 710V714M1118.5 716V723M1119.5 721V727M1121.5 723V727M1122.5 717V719M1126.5 713V720M1128.5 723V725M1130.5 711V718M1131.5 712V719M1132.5 723V727M1134.5 721V725M1135.5 717V720M1140.5 725V728M1143.5 717V722M1145.5 712V717M1149.5 721V728M1154.5 719V723M1157.5 722V727M1159.5 728V733M1166.5 722V726M1170.5 721V728M1173.5 723V730M1174.5 718V724M1175.5 719V723M1177.5 720V727M1180.5 716V724M1187.5 718V721M1189.5 716V723M1190.5 725V733M1193.5 712V717M1195.5 714V719M1196.5 725V730M1202.5 733V737M1205.5 721V724M1209.5 721V725M1212.5 721V727M1213.5 724V730M1215.5 727V731M1216.5 724V727M1218.5 717V721M1219.5 718V722M1222.5 719V723M1224.5 731V736M1225.5 725V730M1235.5 723V729M1238.5 715V720M1239.5 713V719M1241.5 702V710M1243.5 709V714M1245.5 724V727M1248.5 724V731M1251.5 726V731M1253.5 719V725M1254.5 718V722M1256.5 716V721M1257.5 708V715M1264.5 716V722M1265.5 717V723M1266.5 709V712M1272.5 714V720M1274.5 724V727M1275.5 717V721M1276.5 719V726M1277.5 720V727M1285.5 737V742M1286.5 732V736M1288.5 723V727M1289.5 722V726M1290.5 725V731M1291.5 734V738M1297.5 723V729M1298.5 710V715M1299.5 718V721M1301.5 724V729M1302.5 714V718M1304.5 715V723M1305.5 718V721M1306.5 722V727M1307.5 720V727M1310.5 723V731M1315.5 721V725M1316.5 725V731M1317.5 727V734M1321.5 725V731M1324.5 730V735M1326.5 720V727M1329.5 723V728M1333.5 707V712M1334.5 718V726M1337.5 724V728M1338.5 718V724M1339.5 714V720M1346.5 722V727M1348.5 718V722M1351.5 710V715M1352.5 725V728M1354.5 726V730M1356.5 724V731M1357.5 732V737M1359.5 727V731M1360.5 726V733M1363.5 725V731M1365.5 721V724M1366.5 717V721M1368.5 722V730M1371.5 715V719M1375.5 720V723M1377.5 719V723M1378.5 721V724M1381.5 723V730M1382.5 732V739M1384.5 728V731M1386.5 725V730M1387.5 726V732M1390.5 734V738M1393.5 727V735M1394.5 724V731M1395.5 725V731M1396.5 721V728M1397.5 734V739M1401.5 728V732M1403.5 724V727M1404.5 717V720M1405.5 729V734M1411.5 729V735M1413.5 728V736M1416.5 712V718M1420.5 723V727M1425.5 717V723M1431.5 720V726M1432.5 716V723M1433.5 719V724M1434.5 725V728M1443.5 714V721M1445.5 708V712M1446.5 726V731M1448.5 727V731M1453.5 712V718M1455.5 728V733M1457.5 718V725M1458.5 712V719M1460.5 724V730M1463.5 723V726M1464.5 722V727M1466.5 714V720M1467.5 732V736M1469.5 724V728M1472.5 725V729M1483.5 722V729M1486.5 715V722M1487.5 721V726M1489.5 720V727M1490.5 732V739M1491.5 726V734M1492.5 722V726M1493.5 704V710M1494.5 713V719M1499.5 723V730M1500.5 730V733M1503.5 721V728M1506.5 713V719M1508.5 728V734M1509.5 730V734M1516.5 713V717M1519.5 726V730M1520.5 712V717M1522.5 718V722M1523.5 701V706M1529.5 727V734M1530.5 722V730M1534.5 729V731M1535.5 723V731M1537.5 716V724M1538.5 725V733M1542.5 714V719M1547.5 719V724M1550.5 729V733M1552.5 724V731M1556.5 720V724M1557.5 719V726M1559.5 711V719M1560.5 720V726M1566.5 720V724M1570.5 724V731M1572.5 713V718M1574.5 722V725M1577.5 716V719M1585.5 716V724M1587.5 721V729M1588.5 721V727M1589.5 715V722M1590.5 716V719M1593.5 710V713M1594.5 719V721M1597.5 727V733M1599.5 713V718M1600.5 713V716M1601.5 713V721M1603.5 727V735M1604.5 717V720M1606.5 718V725M1607.5 719V725M1611.5 721V725M1612.5 721V725M1613.5 720V726M1617.5 735V743M1618.5 716V723M1619.5 719V723M1621.5 729V736M1623.5 728V732M1627.5 719V723M1632.5 722V725M1635.5 721V724M1636.5 720V725M1637.5 719V727M1640.5 723V726M1642.5 713V718M1643.5 706V708M1645.5 703V707M1646.5 702V707M1647.5 712V716M1658.5 711V714M1659.5 712V715M1660.5 720V725M1663.5 718V723M1664.5 732V735M1666.5 720V726M1672.5 728V735M1676.5 727V733M1677.5 721V725M1682.5 728V736M1683.5 719V725M1684.5 723V727M1688.5 720V723M1692.5 730V733M1694.5 718V724M1697.5 729V732M1704.5 724V729M1706.5 718V722M1710.5 728V734M1712.5 736V742M1713.5 733V740M1716.5 737V741M1717.5 724V732M1720.5 717V721M1722.5 720V727M1723.5 727V731M1724.5 713V721M1725.5 720V725M1731.5 717V722M1735.5 724V727M1738.5 727V733M1741.5 735V739M1742.5 724V731M1744.5 715V720M1745.5 719V727M1748.5 729V735M1750.5 730V734M1751.5 726V730M1754.5 724V731M1757.5 719V723M1758.5 722V726M1759.5 717V725M1767.5 713V717M1772.5 712V717M1775.5 725V732M1780.5 729V732M1781.5 729V732M1787.5 715V721M1788.5 725V732M1789.5 717V723M1790.5 712V714M1791.5 716V720M1795.5 718V725M1798.5 722V725M1806.5 705V712M1808.5 704V711M1809.5 719V726M1810.5 718V721M1812.5 714V720M1813.5 722V727M1815.5 727V732M1821.5 720V724M1822.5 721V724M1825.5 715V719M1826.5 720V728M1829.5 725V732M1830.5 724V730M1839.5 726V733M1840.5 719V724M1841.5 731V736M1843.5 719V722M1850.5 722V729M1853.5 727V732M1854.5 711V716M1856.5 717V722M1859.5 734V740M1860.5 735V740M1865.5 727V732M1867.5 731V735M1869.5 735V741M1873.5 720V724M1876.5 727V734M1880.5 734V738M1883.5 725V733M1884.5 728V733M1886.5 723V727M1888.5 717V723M1889.5 728V734M1892.5 724V730M1895.5 716V721M1896.5 709V717M1897.5 723V730M1900.5 710V715M1901.5 714V720M1903.5 727V734" stroke="#ffff00" stroke-width="1" fill="none"/><path d="M139.5 761V769M151.5 748V758M159.5 747V753M161.5 740V743M166.5 745V750M168.5 755V761M175.5 743V752M178.5 760V763M180.5 750V758M187.5 738V742M188.5 745V748M191.5 764V771M195.5 747V754M198.5 735V741M201.5 746V754M202.5 745V751M209.5 749V759M217.5 744V747M236.5 752V755M241.5 754V757M242.5 754V757M243.5 755V760M249.5 753V762M250.5 747V755M256.5 745V747M260.5 741V748M262.5 767V774M263.5 739V748M264.5 740V744M268.5 743V752M273.5 756V766M281.5 752V761M289.5 746V753M303.5 750V756M317.5 770V779M321.5 740V749M325.5 777V783M336.5 745V756M341.5 741V747M347.5 741V747M349.5 748V758M355.5 777V784M356.5 774V782M358.5 747V758M361.5 751V754M377.5 749V756M385.5 766V773M388.5 750V761M389.5 740V749M391.5 738V742M401.5 755V765M402.5 741V747M408.5 750V753M411.5 756V760M419.5 747V757M422.5 748V752M426.5 749V759M442.5 787V794M456.5 751V755M467.5 737V748M471.5 745V750M475.5 749V758M476.5 756V764M485.5 761V769M489.5 753V758M501.5 746V753M504.5 748V756M513.5 752V760M514.5 740V747M519.5 748V756M520.5 739V748M527.5 739V745M532.5 747V754M533.5 743V750M536.5 750V755M545.5 748V756M547.5 753V762M560.5 768V778M562.5 742V745M578.5 750V759M590.5 756V762M591.5 743V752M598.5 744V753M602.5 756V762M611.5 769V779M615.5 758V765M618.5 751V758M624.5 735V739M636.5 748V758M637.5 754V761M652.5 748V752M657.5 750V759M671.5 743V750M674.5 741V751M679.5 748V755M691.5 746V752M699.5 741V750M701.5 748V754M711.5 765V773M712.5 753V756M718.5 745V753M719.5 738V745M722.5 760V768M727.5 769V779M729.5 748V753M738.5 741V749M743.5 751V755M751.5 778V785M761.5 746V753M767.5 747V754M780.5 748V751M785.5 747V755M801.5 744V748M803.5 743V748M805.5 743V753M806.5 756V763M813.5 745V747M832.5 747V750M845.5 745V749M847.5 746V751M851.5 751V761M856.5 744V748M857.5 741V745M870.5 749V757M872.5 745V749M875.5 753V762M882.5 740V745M905.5 748V757M907.5 747V752M914.5 743V749M922.5 743V751M924.5 746V754M934.5 756V762M944.5 747V750M948.5 755V765M952.5 741V748M955.5 751V760M965.5 743V747M966.5 749V759M972.5 750V760M975.5 739V746M977.5 742V751M979.5 743V752M980.5 754V759M982.5 761V768M988.5 762V771M992.5 749V759M994.5 738V741M1000.5 750V757M1005.5 750V760M1007.5 754V763M1010.5 752V758M1026.5 743V750M1027.5 749V760M1030.5 748V754M1041.5 745V750M1048.5 745V747M1052.5 774V780M1063.5 773V779M1067.5 757V766M1068.5 751V755M1072.5 743V750M1085.5 759V763M1087.5 737V743M1088.5 746V749M1089.5 742V751M1105.5 742V747M1110.5 748V758M1116.5 740V745M1128.5 751V757M1129.5 750V754M1133.5 752V762M1143.5 751V755M1155.5 751V754M1160.5 752V758M1161.5 746V749M1166.5 755V764M1172.5 749V754M1173.5 744V748M1180.5 742V751M1182.5 746V752M1194.5 742V746M1199.5 758V765M1202.5 744V755M1211.5 740V744M1212.5 750V754M1214.5 746V755M1221.5 756V764M1226.5 752V755M1234.5 765V770M1237.5 740V749M1242.5 762V769M1248.5 754V762M1249.5 746V749M1254.5 755V764M1257.5 744V752M1265.5 741V749M1270.5 743V745M1271.5 741V747M1280.5 755V760M1284.5 748V758M1297.5 771V775M1300.5 743V748M1301.5 751V759M1304.5 742V745M1306.5 747V754M1313.5 749V757M1316.5 746V756M1317.5 745V755M1323.5 746V754M1324.5 748V753M1327.5 742V752M1337.5 747V753M1347.5 761V765M1351.5 755V758M1354.5 750V755M1363.5 751V756M1364.5 750V753M1367.5 755V762M1377.5 763V767M1378.5 742V749M1384.5 778V789M1386.5 749V751M1389.5 743V753M1394.5 750V757M1401.5 765V775M1406.5 758V768M1409.5 747V752M1410.5 749V756M1412.5 751V755M1417.5 769V777M1420.5 754V763M1425.5 746V750M1427.5 752V762M1431.5 742V749M1432.5 769V775M1433.5 746V753M1438.5 762V769M1445.5 745V751M1451.5 748V756M1453.5 743V749M1462.5 741V751M1464.5 748V756M1471.5 752V761M1478.5 756V763M1484.5 742V746M1486.5 749V753M1496.5 749V756M1497.5 745V754M1510.5 770V774M1512.5 752V755M1526.5 744V747M1528.5 743V749M1533.5 754V758M1538.5 745V748M1544.5 752V759M1549.5 743V746M1552.5 753V759M1556.5 751V756M1590.5 761V770M1603.5 750V755M1605.5 736V742M1623.5 766V774M1643.5 738V746M1647.5 753V763M1650.5 746V753M1652.5 741V747M1659.5 734V745M1660.5 752V758M1661.5 759V769M1666.5 742V746M1667.5 744V750M1673.5 742V746M1679.5 765V771M1680.5 750V758M1693.5 746V755M1701.5 741V746M1724.5 746V756M1733.5 750V757M1738.5 748V756M1744.5 751V759M1751.5 747V755M1775.5 751V761M1784.5 749V754M1788.5 788V794M1797.5 749V756M1801.5 752V757M1809.5 753V763M1810.5 749V757M1818.5 759V765M1823.5 754V762M1842.5 760V766M1846.5 750V755M1852.5 763V772M1854.5 744V753M1856.5 742V749M1860.5 749V755M1862.5 753V762M1865.5 765V773M1878.5 743V753M1882.5 749V759M1887.5 751V758M1899.5 739V750" stroke="#ffffff" stroke-width="1" fill="none"/><path d="M139 704.5H1904M139 731.5H1904M139 758.5H1904M139 784.5H1904M139 811.5H1904M139 837.5H1904M139 864.5H1904M139 891.5H1904M139 917.5H1904M139 944.5H1904M330.5 677V971M550.5 677V971M770.5 677V971M990.5 677V971M1210.5 677V971M1430.5 677V971M1650.5 677V971M1870.5 677V971" stroke="#fff" stroke-width="1" stroke-dasharray="1 7" fill="none"/><rect x="145" y="677" width="1" height="294" fill="#40c8c8"/><rect x="1873" y="677" width="1" height="294" fill="#40c8c8"/><path d="M132 678.5H135M132 704.5H135M132 731.5H135M132 758.5H135M132 784.5H135M132 811.5H135M132 837.5H135M132 864.5H135M132 891.5H135M132 917.5H135M132 944.5H135M132 971.5H135M330.5 975V978M550.5 975V978M770.5 975V978M990.5 975V978M1210.5 975V978M1430.5 975V978M1650.5 975V978M1870.5 975V978" stroke="#000" stroke-width="1"/><rect x="138" y="994" width="1769" height="20" fill="#fff"/><rect x="138" y="994" width="1768" height="1" fill="#808080"/><rect x="138" y="995" width="1766" height="2" fill="#c8c8ff"/><rect x="139" y="997" width="1765" height="14" fill="#0000ff"/><rect x="1903" y="996" width="1" height="15" fill="#000"/><rect x="145" y="997" width="1" height="14" fill="#40c8c8"/><rect x="1873" y="997" width="1" height="14" fill="#40c8c8"/></svg><div style="position:absolute;left:60px;top:675px;width:71.5px;white-space:nowrap;font-size:14px;color:#000;line-height:14px;transform:scaleX(0.93);transform-origin:100% 0;text-align:right">110</div><div style="position:absolute;left:60px;top:697px;width:71.5px;white-space:nowrap;font-size:14px;color:#000;line-height:14px;transform:scaleX(0.93);transform-origin:100% 0;text-align:right">100</div><div style="position:absolute;left:60px;top:724px;width:71.5px;white-space:nowrap;font-size:14px;color:#000;line-height:14px;transform:scaleX(0.93);transform-origin:100% 0;text-align:right">90</div><div style="position:absolute;left:60px;top:751px;width:71.5px;white-space:nowrap;font-size:14px;color:#000;line-height:14px;transform:scaleX(0.93);transform-origin:100% 0;text-align:right">80</div><div style="position:absolute;left:60px;top:777px;width:71.5px;white-space:nowrap;font-size:14px;color:#000;line-height:14px;transform:scaleX(0.93);transform-origin:100% 0;text-align:right">70</div><div style="position:absolute;left:60px;top:804px;width:71.5px;white-space:nowrap;font-size:14px;color:#000;line-height:14px;transform:scaleX(0.93);transform-origin:100% 0;text-align:right">60</div><div style="position:absolute;left:60px;top:830px;width:71.5px;white-space:nowrap;font-size:14px;color:#000;line-height:14px;transform:scaleX(0.93);transform-origin:100% 0;text-align:right">50</div><div style="position:absolute;left:60px;top:857px;width:71.5px;white-space:nowrap;font-size:14px;color:#000;line-height:14px;transform:scaleX(0.93);transform-origin:100% 0;text-align:right">40</div><div style="position:absolute;left:60px;top:884px;width:71.5px;white-space:nowrap;font-size:14px;color:#000;line-height:14px;transform:scaleX(0.93);transform-origin:100% 0;text-align:right">30</div><div style="position:absolute;left:60px;top:910px;width:71.5px;white-space:nowrap;font-size:14px;color:#000;line-height:14px;transform:scaleX(0.93);transform-origin:100% 0;text-align:right">20</div><div style="position:absolute;left:60px;top:937px;width:71.5px;white-space:nowrap;font-size:14px;color:#000;line-height:14px;transform:scaleX(0.93);transform-origin:100% 0;text-align:right">10</div><div style="position:absolute;left:60px;top:959px;width:71.5px;white-space:nowrap;font-size:14px;color:#000;line-height:14px;transform:scaleX(0.93);transform-origin:100% 0;text-align:right">0</div><div style="position:absolute;left:290px;top:979px;width:80px;white-space:nowrap;font-size:14px;color:#000;line-height:14px;transform:scaleX(0.93);transform-origin:50% 0;text-align:center">06h</div><div style="position:absolute;left:510px;top:979px;width:80px;white-space:nowrap;font-size:14px;color:#000;line-height:14px;transform:scaleX(0.93);transform-origin:50% 0;text-align:center">07h</div><div style="position:absolute;left:730px;top:979px;width:80px;white-space:nowrap;font-size:14px;color:#000;line-height:14px;transform:scaleX(0.93);transform-origin:50% 0;text-align:center">08h</div><div style="position:absolute;left:950px;top:979px;width:80px;white-space:nowrap;font-size:14px;color:#000;line-height:14px;transform:scaleX(0.93);transform-origin:50% 0;text-align:center">09h</div><div style="position:absolute;left:1170px;top:979px;width:80px;white-space:nowrap;font-size:14px;color:#000;line-height:14px;transform:scaleX(0.93);transform-origin:50% 0;text-align:center">10h</div><div style="position:absolute;left:1390px;top:979px;width:80px;white-space:nowrap;font-size:14px;color:#000;line-height:14px;transform:scaleX(0.93);transform-origin:50% 0;text-align:center">11h</div><div style="position:absolute;left:1610px;top:979px;width:80px;white-space:nowrap;font-size:14px;color:#000;line-height:14px;transform:scaleX(0.93);transform-origin:50% 0;text-align:center">12h</div><div style="position:absolute;left:1830px;top:979px;width:80px;white-space:nowrap;font-size:14px;color:#000;line-height:14px;transform:scaleX(0.93);transform-origin:50% 0;text-align:center">13h</div><div style="position:absolute;left:8px;top:994px;width:131px;height:20px;background:#c3c3c3;border-top:1px solid #808080;border-left:1px solid #808080;border-bottom:1px solid #fff;border-right:1px solid #fff"></div><div style="position:absolute;left:10px;top:997px;white-space:nowrap;font-family:Liberation Serif,serif;font-size:14.5px;line-height:15px;color:#000">Mes <span style="color:#707070;font-family:Liberation Sans,sans-serif;font-size:13px">//</span></div><div style="position:absolute;left:0px;top:1022px;width:1920px;height:18px;background:#f0eeeb"></div><div style="position:absolute;left:2px;top:1025px;white-space:nowrap;font-size:12px;line-height:12px;color:#000">F1 : Aide</div><div style="position:absolute;left:1798px;top:1023px;width:1px;height:16px;background:#c8c6c2"></div><div style="position:absolute;left:1834px;top:1023px;width:1px;height:16px;background:#c8c6c2"></div><div style="position:absolute;left:1869px;top:1023px;width:1px;height:16px;background:#c8c6c2"></div><div style="position:absolute;left:1803px;top:1026px;white-space:nowrap;font-size:12px;line-height:12px;color:#000">NUM</div><div style="position:absolute;left:0px;top:1040px;width:1920px;height:8px;background:linear-gradient(#2c4a7c,#1c3868)"></div><div style="position:absolute;left:0px;top:1040px;width:1920px;height:1px;background:#101c30"></div><div style="position:absolute;left:15px;top:1043px;width:26px;height:10px;background:radial-gradient(circle at 50% 80%,#a8c8e8,#4878b0);border-radius:13px 13px 0 0"></div><div style="position:absolute;left:60px;top:1041px;width:54px;height:7px;background:linear-gradient(#c8d4e4,#9cb0cc);border-radius:3px 3px 0 0"></div><div style="position:absolute;left:184px;top:1041px;width:58px;height:7px;background:linear-gradient(#c8c8d8,#a8a8c0);border-radius:3px 3px 0 0"></div><div style="position:absolute;left:246px;top:1041px;width:58px;height:7px;background:linear-gradient(#e0e4ec,#b8c4d4);border-radius:3px 3px 0 0"></div><div style="position:absolute;left:140px;top:1043px;width:22px;height:8px;background:#d83020;border-radius:11px 11px 0 0"></div><div style="position:absolute;left:200px;top:1043px;width:24px;height:8px;background:#f0f0f0;border:3px solid #d02020;border-bottom:none;border-radius:12px 12px 0 0"></div><div style="position:absolute;left:258px;top:1043px;width:10px;height:6px;background:#2040c0"></div><div style="position:absolute;left:268px;top:1043px;width:10px;height:6px;background:#20d020"></div><div style="position:absolute;left:1906px;top:1041px;width:14px;height:7px;background:linear-gradient(#a8b8d0,#8098b8)"></div></body></html>
